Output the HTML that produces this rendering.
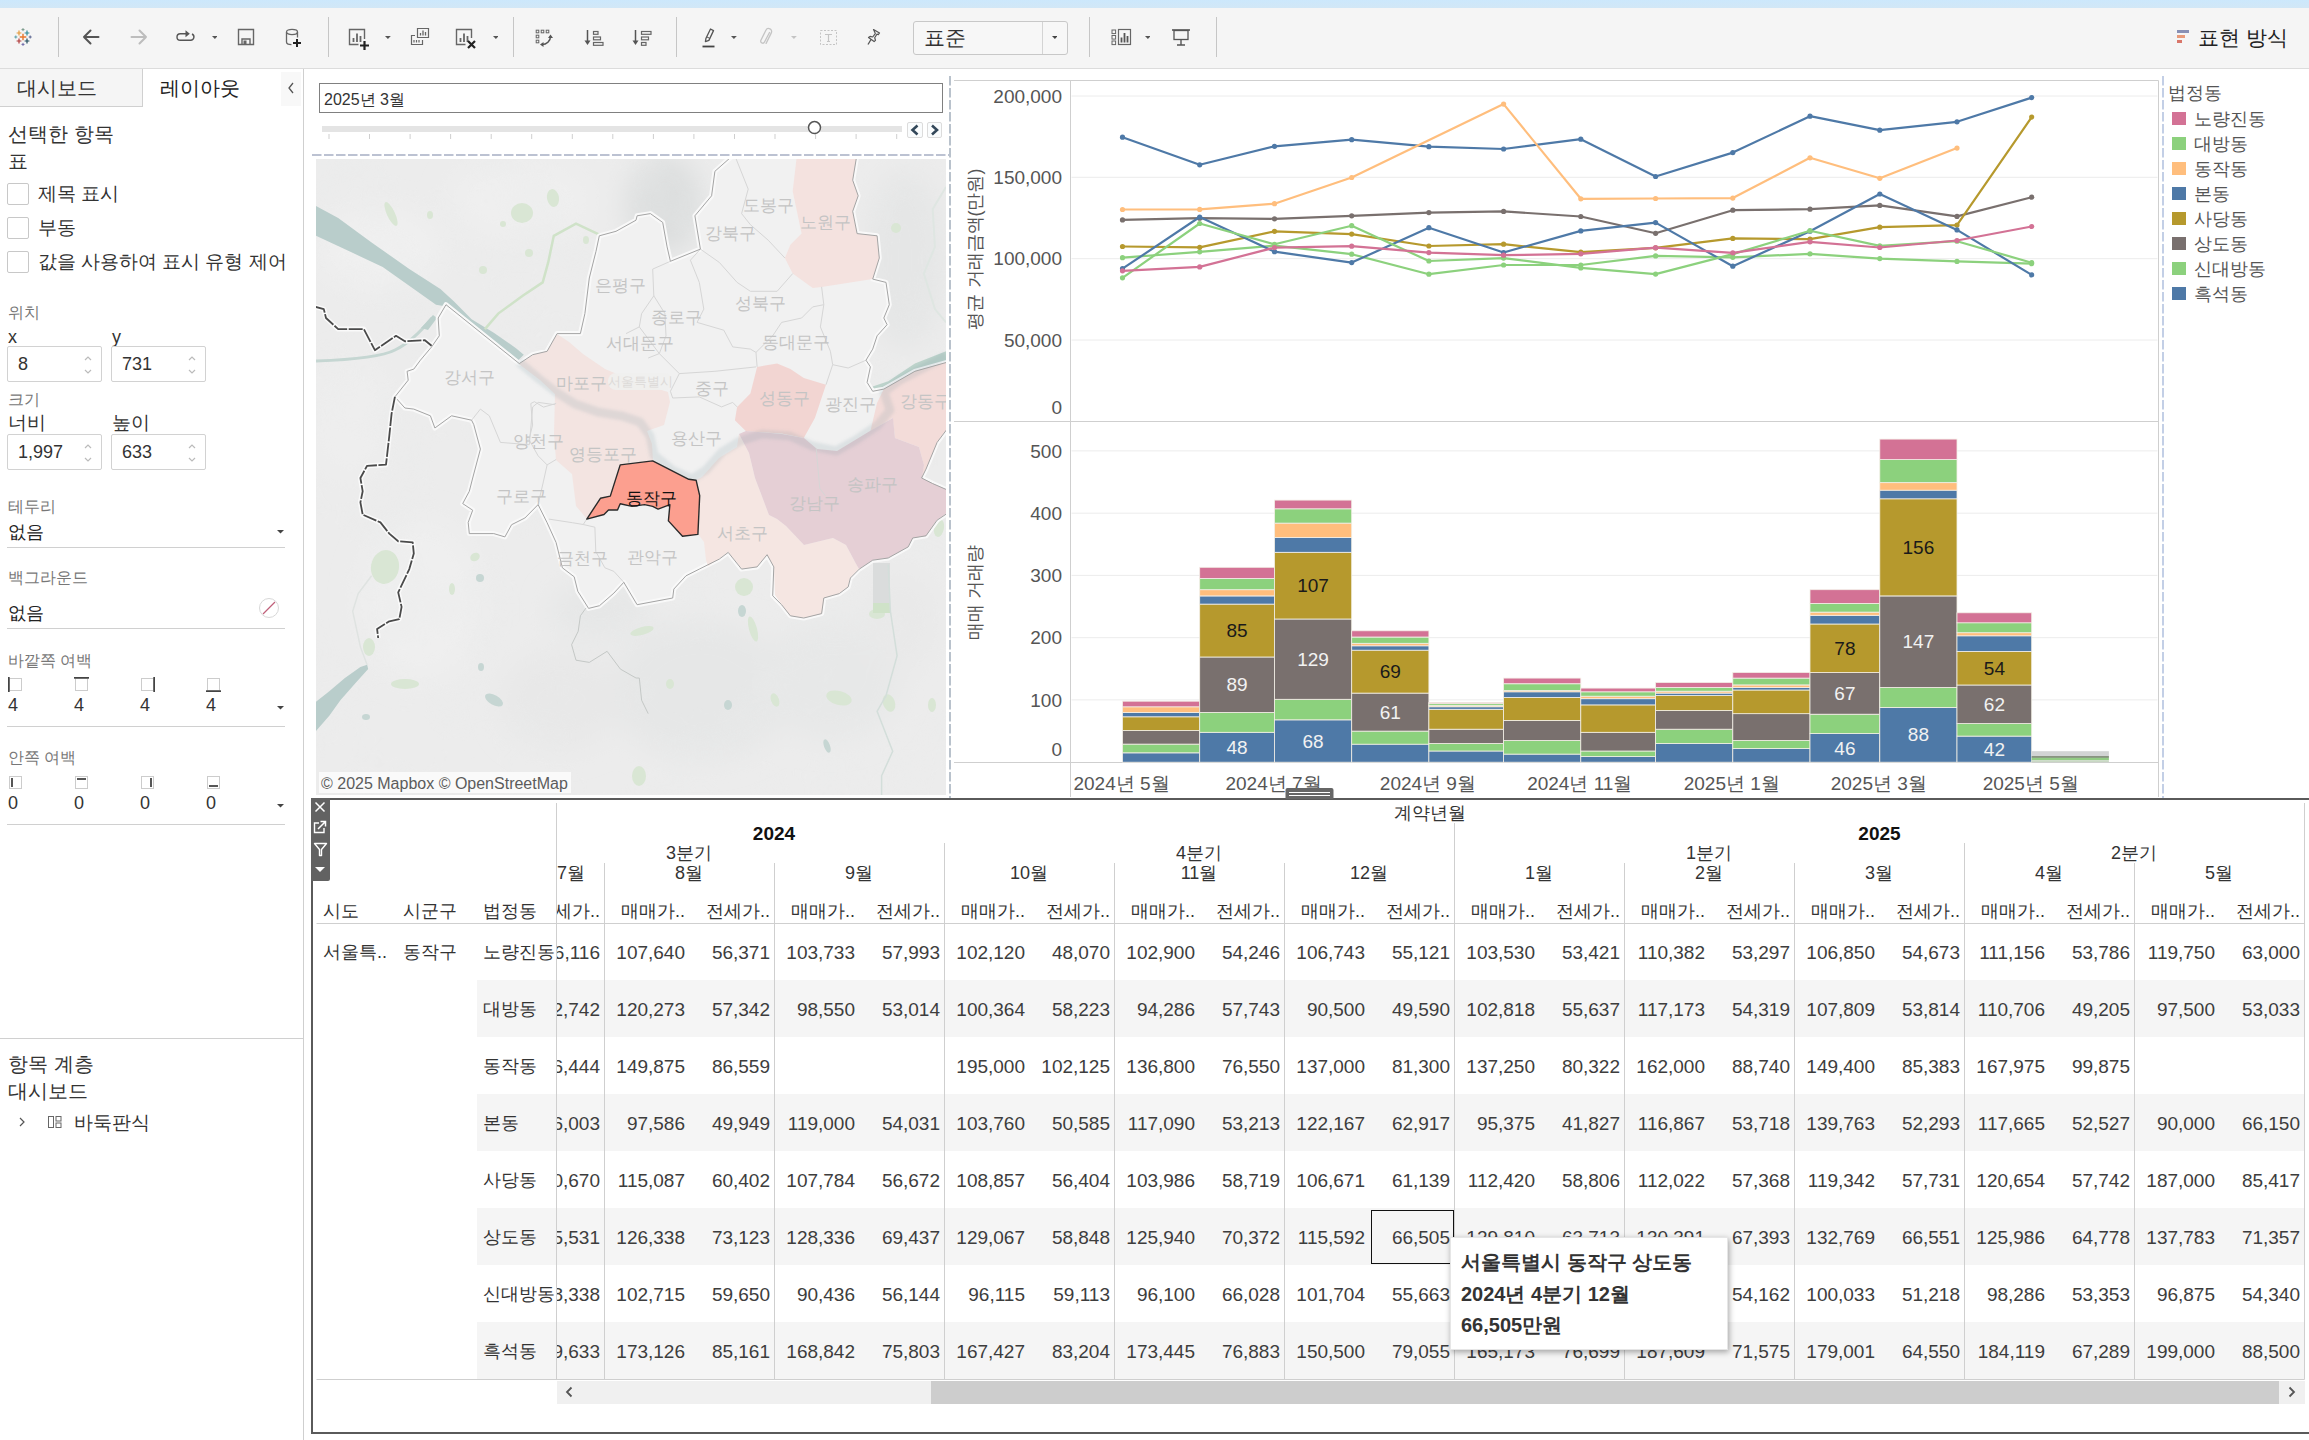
<!DOCTYPE html>
<html lang="ko"><head><meta charset="utf-8"><title>Tableau dashboard</title>
<style>
html,body{margin:0;padding:0;background:#fff;}
body{width:2309px;height:1440px;position:relative;overflow:hidden;font-family:"Liberation Sans", sans-serif;}
div,svg{box-sizing:border-box;}
</style></head><body>
<div style="position:absolute;left:0.0px;top:0.0px;width:2309.0px;height:8.0px;background:linear-gradient(#cce8fc,#d2e7f6);"></div>
<div style="position:absolute;left:0.0px;top:8.0px;width:2309.0px;height:60.0px;background:#f5f5f5;"></div>
<div style="position:absolute;left:0.0px;top:68.0px;width:2309.0px;height:1.0px;background:#dcdcdc;"></div>
<div style="position:absolute;left:58.0px;top:17.0px;width:1.0px;height:40.0px;background:#c6c6c6;"></div>
<div style="position:absolute;left:327.8px;top:17.0px;width:1.0px;height:40.0px;background:#c6c6c6;"></div>
<div style="position:absolute;left:513.0px;top:17.0px;width:1.0px;height:40.0px;background:#c6c6c6;"></div>
<div style="position:absolute;left:676.1px;top:17.0px;width:1.0px;height:40.0px;background:#c6c6c6;"></div>
<div style="position:absolute;left:1088.5px;top:17.0px;width:1.0px;height:40.0px;background:#c6c6c6;"></div>
<div style="position:absolute;left:1216.1px;top:17.0px;width:1.0px;height:40.0px;background:#c6c6c6;"></div>
<svg style="position:absolute;left:11.4px;top:24.8px;" width="24" height="24" viewBox="0 0 24 24"><path d="M8.7 12H15.3M12 8.7V15.3" stroke="#e8762d" stroke-width="1.4" fill="none"/><path d="M5.6 8H10.4M8 5.6V10.4" stroke="#e59a3a" stroke-width="1.2" fill="none"/><path d="M13.6 8H18.4M16 5.6V10.4" stroke="#2e8a98" stroke-width="1.2" fill="none"/><path d="M5.6 16H10.4M8 13.6V18.4" stroke="#b03a3a" stroke-width="1.2" fill="none"/><path d="M13.6 16H18.4M16 13.6V18.4" stroke="#1f4a5c" stroke-width="1.2" fill="none"/><path d="M10.5 4.6H13.5M12 3.0999999999999996V6.1" stroke="#7a9a8a" stroke-width="1.0" fill="none"/><path d="M10.5 19.4H13.5M12 17.9V20.9" stroke="#6f6aa8" stroke-width="1.0" fill="none"/><path d="M3.3 12H6.3M4.8 10.5V13.5" stroke="#5aa0a8" stroke-width="1.0" fill="none"/><path d="M17.7 12H20.7M19.2 10.5V13.5" stroke="#5b6591" stroke-width="1.0" fill="none"/></svg>
<svg style="position:absolute;left:80.0px;top:27.0px;" width="22" height="20" viewBox="0 0 22 20"><path d="M18.5 10H4M10.5 3.5L4 10l6.5 6.5" stroke="#555" stroke-width="2" fill="none" stroke-linecap="round" stroke-linejoin="round"/></svg>
<svg style="position:absolute;left:128.0px;top:27.0px;" width="22" height="20" viewBox="0 0 22 20"><path d="M3.5 10H18M11.5 3.5L18 10l-6.5 6.5" stroke="#bdbdbd" stroke-width="2" fill="none" stroke-linecap="round" stroke-linejoin="round"/></svg>
<svg style="position:absolute;left:174.0px;top:26.0px;" width="24" height="20" viewBox="0 0 24 20"><path d="M12.5 7.7H6.3a3.3 3.3 0 0 0 0 6.6h10.4a3.3 3.3 0 0 0 1.3-6.3" stroke="#555" stroke-width="1.4" fill="none"/><path d="M11.5 4.2l4.3 3.5-4.3 3.5z" fill="#555"/></svg>
<svg style="position:absolute;left:211.5px;top:35.5px;" width="5.8" height="3.9" viewBox="0 0 5.8 3.9"><path d="M0 0 H5.8 L2.9 2.9 Z" fill="#555"/></svg>
<svg style="position:absolute;left:237.0px;top:28.0px;" width="18" height="18" viewBox="0 0 18 18"><path d="M1.5 1.5h15v15h-15z" stroke="#666" stroke-width="1.4" fill="none"/><path d="M5 16.5v-5.5h8v5.5" stroke="#666" stroke-width="1.4" fill="none"/><rect x="6.5" y="12.5" width="3" height="3.5" fill="#666"/></svg>
<svg style="position:absolute;left:284.0px;top:28.0px;" width="20" height="22" viewBox="0 0 20 22"><ellipse cx="8" cy="4" rx="5.5" ry="2.6" stroke="#666" stroke-width="1.3" fill="none"/><path d="M2.5 4v10c0 1.4 2.2 2.6 5 2.6M13.5 4v5.5" stroke="#666" stroke-width="1.3" fill="none"/><path d="M9 15h8M13 11v8" stroke="#222" stroke-width="2" fill="none"/></svg>
<svg style="position:absolute;left:348.0px;top:28.0px;" width="24" height="22" viewBox="0 0 24 22"><path d="M16.5 11V1.5h-15v15h9" stroke="#666" stroke-width="1.4" fill="none"/><path d="M5.5 14V10M9 14V5.5M12.5 14V8" stroke="#666" stroke-width="1.8"/><path d="M12 17.5h9M16.5 13v9" stroke="#222" stroke-width="2.2"/></svg>
<svg style="position:absolute;left:385.1px;top:35.5px;" width="5.8" height="3.9" viewBox="0 0 5.8 3.9"><path d="M0 0 H5.8 L2.9 2.9 Z" fill="#555"/></svg>
<svg style="position:absolute;left:410.0px;top:27.0px;" width="20" height="20" viewBox="0 0 20 20"><path d="M7.5 1.5h11v9h-11z" stroke="#666" stroke-width="1.2" fill="none"/><path d="M10.5 8.5V6M13 8.5V3.5M15.5 8.5V5" stroke="#666" stroke-width="1.3"/><path d="M5 8.5H1.5v9h11v-4.5" stroke="#666" stroke-width="1.2" fill="none"/><path d="M4 15.5V13M6.5 15.5V13M9 15.5V13" stroke="#666" stroke-width="1.2"/></svg>
<svg style="position:absolute;left:455.0px;top:28.0px;" width="24" height="22" viewBox="0 0 24 22"><path d="M16.5 10V1.5h-15v15h9" stroke="#666" stroke-width="1.4" fill="none"/><path d="M5.5 14V10M9 14V5.5M12.5 14V8" stroke="#666" stroke-width="1.8"/><path d="M13 13l7 7M20 13l-7 7" stroke="#222" stroke-width="2.2"/></svg>
<svg style="position:absolute;left:492.5px;top:35.5px;" width="5.8" height="3.9" viewBox="0 0 5.8 3.9"><path d="M0 0 H5.8 L2.9 2.9 Z" fill="#555"/></svg>
<svg style="position:absolute;left:535.0px;top:29.0px;" width="20" height="20" viewBox="0 0 20 20"><rect x="1.2" y="1.2" width="2.6" height="2.6" stroke="#666" stroke-width="1" fill="none"/><rect x="6.2" y="1.2" width="2.6" height="2.6" stroke="#666" stroke-width="1" fill="none"/><rect x="11.2" y="1.2" width="2.6" height="2.6" stroke="#666" stroke-width="1" fill="none"/><rect x="1.2" y="6.2" width="2.6" height="2.6" stroke="#666" stroke-width="1" fill="none"/><rect x="1.2" y="11.2" width="2.6" height="2.6" stroke="#666" stroke-width="1" fill="none"/><path d="M7 15.5c4.5 0 8.5-3.5 8.5-8" stroke="#555" stroke-width="1.5" fill="none"/><path d="M5 15.5l3.5-2.5v5zM15.5 5.5l-2.5 3.5h5z" fill="#555"/></svg>
<svg style="position:absolute;left:584.0px;top:29.0px;" width="20" height="18" viewBox="0 0 20 18"><path d="M3.5 1v13" stroke="#555" stroke-width="1.5"/><path d="M0.5 11.5L3.5 16l3-4.5z" fill="#555"/><rect x="9.5" y="2.5" width="4.5" height="2.8" stroke="#666" stroke-width="1.2" fill="none"/><rect x="9.5" y="8" width="7" height="2.8" stroke="#666" stroke-width="1.2" fill="none"/><rect x="9.5" y="13.5" width="9.5" height="2.8" stroke="#666" stroke-width="1.2" fill="none"/></svg>
<svg style="position:absolute;left:632.0px;top:29.0px;" width="20" height="18" viewBox="0 0 20 18"><path d="M3.5 1v13" stroke="#555" stroke-width="1.5"/><path d="M0.5 11.5L3.5 16l3-4.5z" fill="#555"/><rect x="9.5" y="2.5" width="9.5" height="2.8" stroke="#666" stroke-width="1.2" fill="none"/><rect x="9.5" y="8" width="7" height="2.8" stroke="#666" stroke-width="1.2" fill="none"/><rect x="9.5" y="13.5" width="4.5" height="2.8" stroke="#666" stroke-width="1.2" fill="none"/></svg>
<svg style="position:absolute;left:701.0px;top:27.0px;" width="16" height="22" viewBox="0 0 16 22"><path d="M9.5 2l3 1.6-4.6 9.8-3.5 1.2 0.6-3.4z" stroke="#555" stroke-width="1.3" fill="none" stroke-linejoin="round"/><path d="M6 10l3 1.5" stroke="#555" stroke-width="1"/><path d="M1.5 19.5h12" stroke="#444" stroke-width="1.8"/></svg>
<svg style="position:absolute;left:731.4px;top:35.5px;" width="5.8" height="3.9" viewBox="0 0 5.8 3.9"><path d="M0 0 H5.8 L2.9 2.9 Z" fill="#555"/></svg>
<svg style="position:absolute;left:757.0px;top:27.0px;" width="18" height="22" viewBox="0 0 18 22"><path d="M12.5 5.5l-5 9.5a2 2 0 0 1-3.6-1.8l5-10a3 3 0 0 1 5.4 2.7l-5.2 10.5" stroke="#c4c4c4" stroke-width="1.3" fill="none" stroke-linecap="round"/></svg>
<svg style="position:absolute;left:791.3px;top:35.5px;" width="5.8" height="3.9" viewBox="0 0 5.8 3.9"><path d="M0 0 H5.8 L2.9 2.9 Z" fill="#c4c4c4"/></svg>
<svg style="position:absolute;left:819.0px;top:29.0px;" width="20" height="18" viewBox="0 0 20 18"><rect x="1.5" y="1.5" width="16" height="14" stroke="#c4c4c4" stroke-width="1" stroke-dasharray="2 1.5" fill="none"/><path d="M6 5.5h7M9.5 5.5v7M8 12.5h3" stroke="#c4c4c4" stroke-width="1.2"/></svg>
<svg style="position:absolute;left:865.0px;top:27.0px;" width="18" height="22" viewBox="0 0 18 22"><path d="M8.5 2.5l6 3.5-1.2 1.6-1.4-.4-2.2 3.6.8 2.6-1.4 1.2-5.6-4 1.6-1.2 2.6.6 2.6-3.4-.6-1.6z" stroke="#555" stroke-width="1.2" fill="none" stroke-linejoin="round"/><path d="M6 12.5l-3 5" stroke="#555" stroke-width="1.3"/></svg>
<div style="position:absolute;left:913px;top:21px;width:155px;height:34px;border:1px solid #c8c8c8;border-radius:3px;background:#f7f7f7"></div>
<div style="position:absolute;left:1041.5px;top:22.0px;width:1.0px;height:32.0px;background:#d4d4d4;"></div>
<div style="position:absolute;top:24.0px;height:27px;line-height:27px;font-size:21px;color:#333;white-space:nowrap;left:924.0px;">표준</div>
<svg style="position:absolute;left:1051.6px;top:36.0px;" width="5.8" height="3.9" viewBox="0 0 5.8 3.9"><path d="M0 0 H5.8 L2.9 2.9 Z" fill="#444"/></svg>
<svg style="position:absolute;left:1111.0px;top:28.0px;" width="22" height="19" viewBox="0 0 22 19"><rect x="1" y="2" width="3.6" height="3.6" stroke="#666" stroke-width="1" fill="none"/><rect x="1" y="7.5" width="3.6" height="3.6" stroke="#666" stroke-width="1" fill="none"/><rect x="1" y="13" width="3.6" height="3.6" stroke="#666" stroke-width="1" fill="none"/><rect x="7.5" y="1.5" width="12" height="15" stroke="#666" stroke-width="1.2" fill="none"/><path d="M10.5 14.5V9.5M13.5 14.5V5M16.5 14.5V8" stroke="#555" stroke-width="1.8"/></svg>
<svg style="position:absolute;left:1144.5px;top:35.5px;" width="5.8" height="3.9" viewBox="0 0 5.8 3.9"><path d="M0 0 H5.8 L2.9 2.9 Z" fill="#555"/></svg>
<svg style="position:absolute;left:1171.0px;top:28.0px;" width="20" height="20" viewBox="0 0 20 20"><path d="M1 2h18" stroke="#555" stroke-width="1.6"/><rect x="3" y="2.5" width="14" height="9" stroke="#555" stroke-width="1.3" fill="none"/><path d="M10 11.5v5M6 17h8" stroke="#555" stroke-width="1.4"/></svg>
<svg style="position:absolute;left:2176.0px;top:29.0px;" width="16" height="16" viewBox="0 0 16 16"><rect x="1" y="1" width="12" height="3" fill="#8890b5"/><rect x="1" y="6" width="8" height="3" fill="#e89a7a"/><rect x="1" y="11" width="5" height="3" fill="#d9766a"/></svg>
<div style="position:absolute;top:24.0px;height:27px;line-height:27px;font-size:21px;color:#222;white-space:nowrap;left:2198.0px;">표현 방식</div>
<div style="position:absolute;left:0.0px;top:69.0px;width:303.0px;height:1371.0px;background:#fff;"></div>
<div style="position:absolute;left:303.0px;top:69.0px;width:1.0px;height:1371.0px;background:#cfcfcf;"></div>
<div style="position:absolute;left:0.0px;top:69.0px;width:142.0px;height:37.0px;background:#f5f5f5;"></div>
<div style="position:absolute;left:0.0px;top:106.0px;width:142.0px;height:1.0px;background:#d0d0d0;"></div>
<div style="position:absolute;left:142.0px;top:69.0px;width:1.0px;height:38.0px;background:#d0d0d0;"></div>
<div style="position:absolute;left:281.0px;top:72.0px;width:20.0px;height:34.0px;background:#f8f8f8;"></div>
<div style="position:absolute;top:74.5px;height:26px;line-height:26px;font-size:20px;color:#333;white-space:nowrap;left:17.0px;">대시보드</div>
<div style="position:absolute;top:74.5px;height:26px;line-height:26px;font-size:20px;color:#222;white-space:nowrap;left:160.0px;">레이아웃</div>
<svg style="position:absolute;left:286.0px;top:81.0px;" width="10" height="14" viewBox="0 0 10 14"><path d="M7 2L3 7l4 5" stroke="#555" stroke-width="1.3" fill="none"/></svg>
<div style="position:absolute;top:121.0px;height:26px;line-height:26px;font-size:20px;color:#333;white-space:nowrap;left:8.0px;">선택한 항목</div>
<div style="position:absolute;top:148.0px;height:26px;line-height:26px;font-size:20px;color:#333;white-space:nowrap;left:8.0px;">표</div>
<div style="position:absolute;left:7px;top:183px;width:22px;height:22px;border:1px solid #c8c8c8;border-radius:2px;background:#fff"></div>
<div style="position:absolute;top:182.0px;height:24px;line-height:24px;font-size:18.5px;color:#333;white-space:nowrap;left:38.0px;">제목 표시</div>
<div style="position:absolute;left:7px;top:217px;width:22px;height:22px;border:1px solid #c8c8c8;border-radius:2px;background:#fff"></div>
<div style="position:absolute;top:216.0px;height:24px;line-height:24px;font-size:18.5px;color:#333;white-space:nowrap;left:38.0px;">부동</div>
<div style="position:absolute;left:7px;top:251px;width:22px;height:22px;border:1px solid #c8c8c8;border-radius:2px;background:#fff"></div>
<div style="position:absolute;top:250.0px;height:24px;line-height:24px;font-size:18.5px;color:#333;white-space:nowrap;left:38.0px;">값을 사용하여 표시 유형 제어</div>
<div style="position:absolute;top:301.5px;height:21px;line-height:21px;font-size:16px;color:#777;white-space:nowrap;left:8.0px;">위치</div>
<div style="position:absolute;top:325.5px;height:23px;line-height:23px;font-size:18px;color:#333;white-space:nowrap;left:8.0px;">x</div>
<div style="position:absolute;top:325.5px;height:23px;line-height:23px;font-size:18px;color:#333;white-space:nowrap;left:112.0px;">y</div>
<div style="position:absolute;top:388.5px;height:21px;line-height:21px;font-size:16px;color:#777;white-space:nowrap;left:8.0px;">크기</div>
<div style="position:absolute;top:409.5px;height:25px;line-height:25px;font-size:19px;color:#333;white-space:nowrap;left:8.0px;">너비</div>
<div style="position:absolute;top:409.5px;height:25px;line-height:25px;font-size:19px;color:#333;white-space:nowrap;left:112.0px;">높이</div>
<div style="position:absolute;left:7px;top:346px;width:95px;height:36px;border:1px solid #d2d2d2;border-radius:2px;background:#fff"></div><div style="position:absolute;top:353.1px;height:23px;line-height:23px;font-size:18px;color:#333;white-space:nowrap;left:18.0px;">8</div><svg style="position:absolute;left:83.0px;top:355.0px;" width="10" height="20" viewBox="0 0 10 20"><path d="M2 5l3-3 3 3" stroke="#bbb" stroke-width="1.2" fill="none"/><path d="M2 15l3 3 3-3" stroke="#bbb" stroke-width="1.2" fill="none"/></svg>
<div style="position:absolute;left:111px;top:346px;width:95px;height:36px;border:1px solid #d2d2d2;border-radius:2px;background:#fff"></div><div style="position:absolute;top:353.1px;height:23px;line-height:23px;font-size:18px;color:#333;white-space:nowrap;left:122.0px;">731</div><svg style="position:absolute;left:187.0px;top:355.0px;" width="10" height="20" viewBox="0 0 10 20"><path d="M2 5l3-3 3 3" stroke="#bbb" stroke-width="1.2" fill="none"/><path d="M2 15l3 3 3-3" stroke="#bbb" stroke-width="1.2" fill="none"/></svg>
<div style="position:absolute;left:7px;top:434px;width:95px;height:36px;border:1px solid #d2d2d2;border-radius:2px;background:#fff"></div><div style="position:absolute;top:441.1px;height:23px;line-height:23px;font-size:18px;color:#333;white-space:nowrap;left:18.0px;">1,997</div><svg style="position:absolute;left:83.0px;top:443.0px;" width="10" height="20" viewBox="0 0 10 20"><path d="M2 5l3-3 3 3" stroke="#bbb" stroke-width="1.2" fill="none"/><path d="M2 15l3 3 3-3" stroke="#bbb" stroke-width="1.2" fill="none"/></svg>
<div style="position:absolute;left:111px;top:434px;width:95px;height:36px;border:1px solid #d2d2d2;border-radius:2px;background:#fff"></div><div style="position:absolute;top:441.1px;height:23px;line-height:23px;font-size:18px;color:#333;white-space:nowrap;left:122.0px;">633</div><svg style="position:absolute;left:187.0px;top:443.0px;" width="10" height="20" viewBox="0 0 10 20"><path d="M2 5l3-3 3 3" stroke="#bbb" stroke-width="1.2" fill="none"/><path d="M2 15l3 3 3-3" stroke="#bbb" stroke-width="1.2" fill="none"/></svg>
<div style="position:absolute;top:495.5px;height:21px;line-height:21px;font-size:16px;color:#777;white-space:nowrap;left:8.0px;">테두리</div>
<div style="position:absolute;top:520.5px;height:23px;line-height:23px;font-size:18px;color:#222;white-space:nowrap;left:8.0px;">없음</div>
<svg style="position:absolute;left:276.5px;top:530.2px;" width="7.0" height="4.5" viewBox="0 0 7.0 4.5"><path d="M0 0 H7.0 L3.5 3.5 Z" fill="#444"/></svg>
<div style="position:absolute;left:7.0px;top:547.0px;width:278.0px;height:1.0px;background:#d0d0d0;"></div>
<div style="position:absolute;top:566.5px;height:21px;line-height:21px;font-size:16px;color:#777;white-space:nowrap;left:8.0px;">백그라운드</div>
<div style="position:absolute;top:601.5px;height:23px;line-height:23px;font-size:18px;color:#222;white-space:nowrap;left:8.0px;">없음</div>
<svg style="position:absolute;left:258.0px;top:597.0px;" width="22" height="22" viewBox="0 0 22 22"><circle cx="11" cy="11" r="9.5" stroke="#d8d8d8" stroke-width="1" fill="#fff"/><path d="M5 17L17 5" stroke="#c0607a" stroke-width="1.2"/></svg>
<div style="position:absolute;left:7.0px;top:628.0px;width:278.0px;height:1.0px;background:#d0d0d0;"></div>
<div style="position:absolute;top:649.5px;height:21px;line-height:21px;font-size:16px;color:#777;white-space:nowrap;left:8.0px;">바깥쪽 여백</div>
<svg style="position:absolute;left:8.0px;top:677.0px;" width="15" height="15" viewBox="0 0 15 15"><rect x="1.5" y="1.5" width="12" height="12" stroke="#999" stroke-width="1" stroke-dasharray="1 1" fill="none"/><path d="M0.8 0v15" stroke="#444" stroke-width="1.8"/></svg>
<div style="position:absolute;top:693.6px;height:23px;line-height:23px;font-size:18px;color:#333;white-space:nowrap;left:8.0px;">4</div>
<svg style="position:absolute;left:8.0px;top:775.0px;" width="15" height="15" viewBox="0 0 15 15"><rect x="1.5" y="1.5" width="12" height="12" stroke="#999" stroke-width="1" stroke-dasharray="1 1" fill="none"/><path d="M4 3v9" stroke="#444" stroke-width="1.8"/></svg>
<div style="position:absolute;top:791.6px;height:23px;line-height:23px;font-size:18px;color:#333;white-space:nowrap;left:8.0px;">0</div>
<svg style="position:absolute;left:74.0px;top:677.0px;" width="15" height="15" viewBox="0 0 15 15"><rect x="1.5" y="1.5" width="12" height="12" stroke="#999" stroke-width="1" stroke-dasharray="1 1" fill="none"/><path d="M0 0.8h15" stroke="#444" stroke-width="1.8"/></svg>
<div style="position:absolute;top:693.6px;height:23px;line-height:23px;font-size:18px;color:#333;white-space:nowrap;left:74.0px;">4</div>
<svg style="position:absolute;left:74.0px;top:775.0px;" width="15" height="15" viewBox="0 0 15 15"><rect x="1.5" y="1.5" width="12" height="12" stroke="#999" stroke-width="1" stroke-dasharray="1 1" fill="none"/><path d="M3 4h9" stroke="#444" stroke-width="1.8"/></svg>
<div style="position:absolute;top:791.6px;height:23px;line-height:23px;font-size:18px;color:#333;white-space:nowrap;left:74.0px;">0</div>
<svg style="position:absolute;left:140.0px;top:677.0px;" width="15" height="15" viewBox="0 0 15 15"><rect x="1.5" y="1.5" width="12" height="12" stroke="#999" stroke-width="1" stroke-dasharray="1 1" fill="none"/><path d="M14.2 0v15" stroke="#444" stroke-width="1.8"/></svg>
<div style="position:absolute;top:693.6px;height:23px;line-height:23px;font-size:18px;color:#333;white-space:nowrap;left:140.0px;">4</div>
<svg style="position:absolute;left:140.0px;top:775.0px;" width="15" height="15" viewBox="0 0 15 15"><rect x="1.5" y="1.5" width="12" height="12" stroke="#999" stroke-width="1" stroke-dasharray="1 1" fill="none"/><path d="M11 3v9" stroke="#444" stroke-width="1.8"/></svg>
<div style="position:absolute;top:791.6px;height:23px;line-height:23px;font-size:18px;color:#333;white-space:nowrap;left:140.0px;">0</div>
<svg style="position:absolute;left:206.0px;top:677.0px;" width="15" height="15" viewBox="0 0 15 15"><rect x="1.5" y="1.5" width="12" height="12" stroke="#999" stroke-width="1" stroke-dasharray="1 1" fill="none"/><path d="M0 14.2h15" stroke="#444" stroke-width="1.8"/></svg>
<div style="position:absolute;top:693.6px;height:23px;line-height:23px;font-size:18px;color:#333;white-space:nowrap;left:206.0px;">4</div>
<svg style="position:absolute;left:206.0px;top:775.0px;" width="15" height="15" viewBox="0 0 15 15"><rect x="1.5" y="1.5" width="12" height="12" stroke="#999" stroke-width="1" stroke-dasharray="1 1" fill="none"/><path d="M3 11h9" stroke="#444" stroke-width="1.8"/></svg>
<div style="position:absolute;top:791.6px;height:23px;line-height:23px;font-size:18px;color:#333;white-space:nowrap;left:206.0px;">0</div>
<svg style="position:absolute;left:276.5px;top:706.2px;" width="7.0" height="4.5" viewBox="0 0 7.0 4.5"><path d="M0 0 H7.0 L3.5 3.5 Z" fill="#444"/></svg>
<svg style="position:absolute;left:276.5px;top:804.2px;" width="7.0" height="4.5" viewBox="0 0 7.0 4.5"><path d="M0 0 H7.0 L3.5 3.5 Z" fill="#444"/></svg>
<div style="position:absolute;left:7.0px;top:726.0px;width:278.0px;height:1.0px;background:#d0d0d0;"></div>
<div style="position:absolute;top:746.5px;height:21px;line-height:21px;font-size:16px;color:#777;white-space:nowrap;left:8.0px;">안쪽 여백</div>
<div style="position:absolute;left:7.0px;top:824.0px;width:278.0px;height:1.0px;background:#d0d0d0;"></div>
<div style="position:absolute;left:0.0px;top:1038.0px;width:303.0px;height:1.0px;background:#d0d0d0;"></div>
<div style="position:absolute;top:1051.0px;height:26px;line-height:26px;font-size:20px;color:#333;white-space:nowrap;left:8.0px;">항목 계층</div>
<div style="position:absolute;top:1078.0px;height:26px;line-height:26px;font-size:20px;color:#333;white-space:nowrap;left:8.0px;">대시보드</div>
<svg style="position:absolute;left:17.0px;top:1116.0px;" width="10" height="12" viewBox="0 0 10 12"><path d="M3 2l4 4-4 4" stroke="#555" stroke-width="1.2" fill="none"/></svg>
<svg style="position:absolute;left:47.0px;top:1114.0px;" width="16" height="16" viewBox="0 0 16 16"><rect x="1.5" y="2.5" width="5" height="11" stroke="#666" stroke-width="1" fill="none"/><rect x="9" y="2.5" width="5" height="4.5" stroke="#666" stroke-width="1" fill="none"/><rect x="9" y="9" width="5" height="4.5" stroke="#666" stroke-width="1" fill="none"/></svg>
<div style="position:absolute;top:1110.0px;height:25px;line-height:25px;font-size:19px;color:#333;white-space:nowrap;left:74.0px;">바둑판식</div>
<div style="position:absolute;left:319px;top:83px;width:624px;height:30px;border:1px solid #808080;background:#fff"></div>
<div style="position:absolute;top:89.0px;height:21px;line-height:21px;font-size:16px;color:#333;white-space:nowrap;left:324.0px;">2025년 3월</div>
<div style="position:absolute;left:322.0px;top:126.0px;width:580.0px;height:6.0px;background:#e4e4e4;"></div>
<svg style="position:absolute;left:322.0px;top:133.5px;" width="590" height="6" viewBox="0 0 590 6"><rect x="6.5" y="0" width="1" height="5" fill="#cfcfcf"/><rect x="47.0" y="0" width="1" height="5" fill="#cfcfcf"/><rect x="87.6" y="0" width="1" height="5" fill="#cfcfcf"/><rect x="128.1" y="0" width="1" height="5" fill="#cfcfcf"/><rect x="168.7" y="0" width="1" height="5" fill="#cfcfcf"/><rect x="209.2" y="0" width="1" height="5" fill="#cfcfcf"/><rect x="249.8" y="0" width="1" height="5" fill="#cfcfcf"/><rect x="290.3" y="0" width="1" height="5" fill="#cfcfcf"/><rect x="330.9" y="0" width="1" height="5" fill="#cfcfcf"/><rect x="371.4" y="0" width="1" height="5" fill="#cfcfcf"/><rect x="412.0" y="0" width="1" height="5" fill="#cfcfcf"/><rect x="452.5" y="0" width="1" height="5" fill="#cfcfcf"/><rect x="493.1" y="0" width="1" height="5" fill="#cfcfcf"/><rect x="533.6" y="0" width="1" height="5" fill="#cfcfcf"/><rect x="574.2" y="0" width="1" height="5" fill="#cfcfcf"/></svg>
<svg style="position:absolute;left:806.0px;top:119.0px;" width="18" height="18" viewBox="0 0 18 18"><circle cx="8.5" cy="8.6" r="6" stroke="#555" stroke-width="1.5" fill="#fff"/></svg>
<div style="position:absolute;left:907px;top:122px;width:15.5px;height:15.5px;border:1px solid #dcdcdc;border-radius:2px;background:#fafcfd"></div>
<svg style="position:absolute;left:907.0px;top:122.0px;" width="16" height="16" viewBox="0 0 16 16"><path d="M10.5 3.5L5.5 8l5 4.5" stroke="#33485a" stroke-width="2.6" fill="none"/></svg>
<div style="position:absolute;left:926.5px;top:122px;width:15.5px;height:15.5px;border:1px solid #dcdcdc;border-radius:2px;background:#fafcfd"></div>
<svg style="position:absolute;left:926.5px;top:122.0px;" width="16" height="16" viewBox="0 0 16 16"><path d="M5 3.5L10 8l-5 4.5" stroke="#33485a" stroke-width="2.6" fill="none"/></svg>
<svg style="position:absolute;left:0;top:0" width="2309" height="800" viewBox="0 0 2309 800"><path d="M312 155H950" stroke="#bcc2d2" stroke-width="2" stroke-dasharray="9.5 2.5" fill="none"/><path d="M950 76V798" stroke="#b9c2cc" stroke-width="2" stroke-dasharray="9.5 2.5" fill="none"/><path d="M2163 76V798" stroke="#c3cfe6" stroke-width="2" stroke-dasharray="9.5 2.5" fill="none"/></svg>
<svg style="position:absolute;left:316px;top:159px" width="630" height="636" viewBox="316 159 630 636"><defs><filter id="bl" x="-50%" y="-50%" width="200%" height="200%"><feGaussianBlur stdDeviation="14"/></filter><filter id="b2" x="-20%" y="-20%" width="140%" height="140%"><feGaussianBlur stdDeviation="1.6"/></filter><filter id="tx" x="0" y="0" width="100%" height="100%"><feTurbulence type="fractalNoise" baseFrequency="0.014" numOctaves="3" seed="7" result="n"/><feColorMatrix in="n" type="matrix" values="0 0 0 0 0.82  0 0 0 0 0.83  0 0 0 0 0.83  1.6 0 0 0 -0.72"/></filter></defs><rect x="316" y="159" width="630" height="636" fill="#ececec"/><g filter="url(#bl)"><ellipse cx="665" cy="205" rx="38" ry="50" fill="#dcdede"/><ellipse cx="905" cy="260" rx="40" ry="90" fill="#e5e6e6"/><ellipse cx="700" cy="690" rx="90" ry="70" fill="#e6e7e7"/><ellipse cx="560" cy="700" rx="60" ry="50" fill="#e8e8e8"/><ellipse cx="830" cy="680" rx="70" ry="60" fill="#e7e8e8"/><ellipse cx="600" cy="610" rx="50" ry="30" fill="#e6e7e7"/><ellipse cx="900" cy="620" rx="40" ry="50" fill="#e9e9e9"/><ellipse cx="380" cy="250" rx="60" ry="40" fill="#f0f0f0"/><ellipse cx="420" cy="600" rx="60" ry="80" fill="#efefef"/><ellipse cx="350" cy="420" rx="40" ry="60" fill="#eeeeee"/><ellipse cx="520" cy="200" rx="70" ry="40" fill="#efefef"/></g><rect x="316" y="159" width="630" height="636" filter="url(#tx)" opacity="0.55"/><path d="M313.8 204.7 L338.2 218.0 L371.6 242.4 L409.3 269.1 L440.4 289.1 L453.8 301.3 L471.6 319.3 L493.8 332.7 L516.0 348.2 L523.8 354.7 L518.2 360.2 L493.8 342.4 L471.6 326.9 L449.3 306.9 L436.0 304.7 L413.8 289.1 L382.7 266.9 L349.3 251.3 L313.8 234.7 Z" fill="#b9cdcb"/><path d="M950.4 349.6 L914.9 363.6 L888.2 381.3 L870.4 387.3 L873.8 391.8 L890.4 388.7 L917.1 372.4 L950.4 360.7 Z" fill="#bdd3cb"/><path d="M313.8 703.6 L329.3 691.3 L344.9 678.0 L360.4 666.9 L367.1 664.7 L368.2 669.1 L356.0 682.4 L340.4 700.2 L329.3 715.8 L313.8 733.6 Z" fill="#b9cdcb"/><path d="M316 361C345 360 380 358 395 350C410 343 422 330 432 318" stroke="#c5d6d2" stroke-width="3" fill="none"/><path d="M421 328l12-13 4 3-9 12z" fill="#bcd0cc"/><ellipse cx="494" cy="700" rx="10" ry="5" transform="rotate(30 494 700)" fill="#c6d6d3"/><ellipse cx="480" cy="578" rx="4" ry="4" transform="rotate(0 480 578)" fill="#c6d6d3"/><ellipse cx="742" cy="611" rx="4" ry="6" transform="rotate(0 742 611)" fill="#c6d6d3"/><ellipse cx="728" cy="705" rx="4" ry="5" transform="rotate(0 728 705)" fill="#c6d6d3"/><ellipse cx="366" cy="717" rx="4" ry="3" transform="rotate(0 366 717)" fill="#c6d6d3"/><ellipse cx="481" cy="667" rx="3" ry="4" transform="rotate(0 481 667)" fill="#c6d6d3"/><ellipse cx="827" cy="746" rx="3" ry="7" transform="rotate(-20 827 746)" fill="#c6d6d3"/><ellipse cx="391" cy="214" rx="4" ry="13" transform="rotate(-25 391 214)" fill="#d9e6d4"/><ellipse cx="522" cy="213" rx="11" ry="10" transform="rotate(0 522 213)" fill="#d9e6d4"/><ellipse cx="553" cy="198" rx="6" ry="9" transform="rotate(-10 553 198)" fill="#d9e6d4"/><ellipse cx="483" cy="270" rx="4" ry="4" transform="rotate(0 483 270)" fill="#d9e6d4"/><ellipse cx="529" cy="253" rx="4" ry="4" transform="rotate(0 529 253)" fill="#d9e6d4"/><ellipse cx="430" cy="215" rx="3" ry="4" transform="rotate(0 430 215)" fill="#d9e6d4"/><ellipse cx="503" cy="224" rx="3" ry="3" transform="rotate(0 503 224)" fill="#d9e6d4"/><ellipse cx="586" cy="240" rx="3" ry="4" transform="rotate(0 586 240)" fill="#d9e6d4"/><ellipse cx="385" cy="567" rx="14" ry="17" transform="rotate(10 385 567)" fill="#d9e6d4"/><ellipse cx="369" cy="647" rx="6" ry="9" transform="rotate(0 369 647)" fill="#d9e6d4"/><ellipse cx="405" cy="684" rx="14" ry="5" transform="rotate(0 405 684)" fill="#d9e6d4"/><ellipse cx="452" cy="589" rx="3" ry="6" transform="rotate(0 452 589)" fill="#d9e6d4"/><ellipse cx="475" cy="557" rx="5" ry="4" transform="rotate(-30 475 557)" fill="#d9e6d4"/><ellipse cx="744" cy="587" rx="9" ry="9" transform="rotate(0 744 587)" fill="#d9e6d4"/><ellipse cx="753" cy="629" rx="4" ry="13" transform="rotate(-15 753 629)" fill="#d9e6d4"/><ellipse cx="839" cy="698" rx="13" ry="7" transform="rotate(15 839 698)" fill="#d9e6d4"/><ellipse cx="877" cy="614" rx="8" ry="5" transform="rotate(0 877 614)" fill="#d9e6d4"/><ellipse cx="642" cy="631" rx="12" ry="4" transform="rotate(-15 642 631)" fill="#d9e6d4"/><ellipse cx="639" cy="776" rx="7" ry="10" transform="rotate(0 639 776)" fill="#d9e6d4"/><ellipse cx="896" cy="228" rx="5" ry="5" transform="rotate(0 896 228)" fill="#d9e6d4"/><ellipse cx="889" cy="703" rx="6" ry="9" transform="rotate(-20 889 703)" fill="#d9e6d4"/><ellipse cx="939" cy="528" rx="5" ry="9" transform="rotate(10 939 528)" fill="#d9e6d4"/><ellipse cx="670" cy="684" rx="4" ry="5" transform="rotate(0 670 684)" fill="#d9e6d4"/><ellipse cx="775" cy="700" rx="4" ry="7" transform="rotate(-20 775 700)" fill="#d9e6d4"/><ellipse cx="932" cy="705" rx="4" ry="7" transform="rotate(0 932 705)" fill="#d9e6d4"/><rect x="873" y="563" width="17" height="48" fill="#dadcdc"/><rect x="873" y="603" width="17" height="10" fill="#cfe2c8"/><path d="M484.9 329.1 L498.2 313.6 L522.7 295.8 L542.7 282.4 L548.2 262.4 L553.8 235.8 L576.0 223.6 L599.3 234.7" stroke="#cfe2c8" stroke-width="2.5" fill="none"/><path d="M888.2 564.7 L890.4 611.3 L897.1 655.8 L886.0 695.8 L877.1 711.3 L892.7 751.3 L881.6 775.8 L881.6 798.0" stroke="#d3deda" stroke-width="1.5" fill="none"/><path d="M946.0 186.9 L932.7 209.1 L934.9 246.9 L923.8 273.6 L934.9 309.1 L946.0 322.4" stroke="#dfe6e2" stroke-width="2" fill="none"/><path d="M367.1 664.7 L360.4 646.9 L352.7 611.3 L358.2 593.6 L371.6 575.8" stroke="#dfe3e1" stroke-width="1.5" fill="none"/><path d="M446.0 304.7 L519.3 363.6 L532.7 354.7 L547.1 351.3 L557.1 333.6 L580.4 333.6 L584.9 313.6 L589.3 278.0 L596.0 251.3 L599.3 235.8 L616.0 231.3 L636.0 220.2 L637.1 215.8 L650.4 213.6 L662.7 222.4 L667.1 246.9 L670.4 261.3 L700.4 249.1 L694.9 215.8 L711.6 195.8 L714.9 171.3 L734.9 153.6 L857.1 153.6 L852.7 180.2 L858.2 195.8 L852.7 211.3 L857.1 233.6 L877.1 235.8 L879.3 258.0 L872.7 279.1 L886.0 282.4 L889.3 304.7 L883.8 318.0 L887.1 324.7 L877.1 335.8 L872.7 349.1 L866.0 360.2 L870.4 366.9 L867.1 382.4 L872.7 391.3 L883.8 389.1 L914.9 371.3 L950.4 361.3 L950.4 424.7 L937.1 442.4 L926.0 469.1 L921.6 478.0 L932.7 483.6 L950.4 491.3 L950.4 511.3 L937.1 520.2 L926.0 535.8 L912.7 538.0 L908.2 546.9 L888.2 558.0 L872.7 560.2 L859.3 569.1 L850.4 578.0 L848.2 586.9 L839.3 593.6 L823.8 598.0 L821.6 613.6 L803.8 618.0 L790.4 615.8 L781.6 604.7 L772.7 595.8 L773.8 566.9 L767.1 554.7 L757.1 566.9 L741.6 569.1 L728.2 552.4 L719.3 559.1 L699.3 569.1 L686.0 575.8 L673.8 589.1 L672.7 598.0 L637.1 604.7 L623.8 582.3 L613.9 593.1 L599.5 605.7 L588.6 608.4 L577.8 591.3 L574.2 576.8 L562.4 567.8 L556.1 542.5 L547.1 522.7 L538.1 504.6 L524.9 518.0 L511.6 524.7 L504.9 536.9 L493.8 533.6 L469.3 533.6 L468.2 522.4 L472.7 510.2 L462.7 503.6 L469.3 491.3 L472.7 478.0 L480.4 449.1 L473.8 424.7 L471.6 420.2 L451.6 415.8 L434.9 428.0 L430.4 415.8 L413.8 409.1 L404.9 408.0 L394.9 396.9 L408.2 380.2 L407.1 371.3 L413.8 369.1 L420.4 360.2 L431.6 346.9 L439.3 335.8 L438.2 318.0 Z" fill="#f1f1f1" stroke="#f9f9f9" stroke-width="5" stroke-linejoin="round"/><path d="M519.0 364.0 L533.0 355.0 L547.0 351.0 L557.0 334.0 L569.0 342.0 L583.0 354.0 L605.0 369.0 L636.0 382.0 L668.0 392.0 L670.0 402.0 L664.0 425.0 L647.0 431.0 L652.0 444.0 L653.0 461.0 L620.0 465.0 L610.0 496.0 L600.0 498.0 L587.0 519.0 L576.0 506.0 L572.0 474.0 L556.0 460.0 L554.0 434.0 L555.0 394.0 L540.0 380.0 Z" fill="#f3e4e1"/><path d="M797.1 153.6 L857.1 153.6 L852.7 180.2 L858.2 195.8 L852.7 211.3 L857.1 233.6 L877.1 235.8 L879.3 258.0 L872.7 279.1 L821.6 286.9 L812.7 288.0 L792.7 273.6 L784.9 258.0 L790.4 244.7 L801.6 233.6 L792.7 191.3 Z" fill="#f4e2df"/><path d="M757.1 366.9 L777.1 363.6 L790.4 369.1 L803.8 378.0 L826.0 384.7 L814.9 418.0 L803.8 438.0 L781.6 433.6 L746.0 431.3 L734.9 420.2 L737.1 406.9 L750.4 393.6 Z" fill="#f2d5d2"/><path d="M883.8 389.1 L914.9 371.3 L950.0 361.0 L950.0 424.7 L937.1 442.4 L926.0 469.1 L921.6 478.0 L923.8 464.7 L919.0 447.0 L895.0 438.0 L892.7 418.0 L870.4 431.3 L877.0 403.0 Z" fill="#f3dcd9"/><path d="M696.0 480.0 L702.0 477.0 L719.0 458.0 L737.0 447.0 L739.0 434.0 L749.0 453.0 L755.0 478.0 L769.0 515.0 L777.0 519.0 L786.0 526.0 L804.0 545.0 L833.0 538.0 L846.0 545.0 L855.0 562.0 L859.0 569.0 L850.0 578.0 L848.0 587.0 L839.0 594.0 L824.0 598.0 L822.0 614.0 L804.0 618.0 L790.0 616.0 L782.0 605.0 L775.0 595.0 L774.0 567.0 L767.0 555.0 L757.0 567.0 L742.0 569.0 L728.0 552.0 L719.0 559.0 L708.0 566.0 L706.0 560.0 L704.0 542.0 L698.0 534.0 L700.0 496.0 Z" fill="#f5e6e2"/><path d="M746.0 431.0 L782.0 434.0 L804.0 438.0 L817.0 449.0 L837.0 451.0 L870.0 431.0 L893.0 418.0 L895.0 438.0 L919.0 447.0 L924.0 465.0 L922.0 478.0 L932.0 483.0 L950.0 491.0 L950.0 511.0 L937.0 520.0 L926.0 536.0 L913.0 538.0 L908.0 547.0 L888.0 558.0 L873.0 560.0 L859.0 569.0 L855.0 562.0 L846.0 545.0 L833.0 538.0 L804.0 545.0 L786.0 526.0 L777.0 519.0 L769.0 515.0 L755.0 478.0 L749.0 453.0 L739.0 434.0 Z" fill="#e5cfd5"/><path d="M519.0 362.0 L538.0 378.0 L556.0 392.0 L575.0 404.0 L598.0 412.0 L622.0 416.0 L640.0 422.0 L650.0 436.0 L654.0 455.0 L672.0 470.0 L692.0 479.0 L706.0 470.0 L722.0 452.0 L740.0 441.0 L762.0 434.0 L790.0 436.0 L812.0 446.0 L836.0 451.0 L856.0 440.0 L878.0 425.0 L890.0 410.0 L884.0 392.0 L900.0 380.0 L946.0 356.0" stroke="rgba(120,150,160,0.17)" stroke-width="9" fill="none" stroke-linejoin="round" filter="url(#b2)"/><path d="M670.4 261.3 L652.7 269.1 L653.8 295.8 L641.6 313.6 L639.3 326.9 L626.0 333.6" stroke="#d6d6d6" stroke-width="1" fill="none"/><path d="M700.4 249.1 L690.4 260.2 L699.3 282.4 L703.8 309.1 L697.1 322.4 L723.8 330.2 L732.7 346.9 L750.4 349.1 L756.0 352.4 L757.1 366.9" stroke="#d6d6d6" stroke-width="1" fill="none"/><path d="M734.9 155.8 L748.2 189.1 L741.6 213.6 L750.4 224.7 L768.2 240.2 L784.9 258.0" stroke="#d6d6d6" stroke-width="1" fill="none"/><path d="M700.4 249.1 L719.3 262.4 L737.1 282.4 L750.4 291.3 L777.1 291.3 L792.7 273.6" stroke="#d6d6d6" stroke-width="1" fill="none"/><path d="M821.6 286.9 L823.8 304.7 L812.7 306.9 L801.6 318.0 L781.6 322.4 L772.7 335.8 L756.0 352.4" stroke="#d6d6d6" stroke-width="1" fill="none"/><path d="M823.8 304.7 L820.4 326.9 L830.4 351.3 L832.7 364.7 L848.2 368.0 L866.0 360.2" stroke="#d6d6d6" stroke-width="1" fill="none"/><path d="M832.7 364.7 L826.0 384.7" stroke="#d6d6d6" stroke-width="1" fill="none"/><path d="M756.0 366.9 L714.9 371.3 L679.3 373.6 L670.4 391.3" stroke="#d6d6d6" stroke-width="1" fill="none"/><path d="M670.4 391.3 L672.7 398.0 L699.3 396.9 L721.6 406.9 L732.7 402.4 L737.1 406.9" stroke="#d6d6d6" stroke-width="1" fill="none"/><path d="M659.3 353.6 L679.3 373.6" stroke="#d6d6d6" stroke-width="1" fill="none"/><path d="M639.3 326.9 L659.3 353.6 L648.2 358.0" stroke="#d6d6d6" stroke-width="1" fill="none"/><path d="M653.8 295.8 L664.9 313.6 L666.0 335.8 L659.3 353.6" stroke="#d6d6d6" stroke-width="1" fill="none"/><path d="M530.8 403.5 L534.4 401.7 L543.5 407.1 L556.1 403.5" stroke="#d6d6d6" stroke-width="1" fill="none"/><path d="M530.8 403.5 L532.6 425.1 L529.0 439.6 L538.1 455.8 L547.1 464.9 L556.1 459.5" stroke="#d6d6d6" stroke-width="1" fill="none"/><path d="M547.1 464.9 L543.5 481.1 L538.1 504.6" stroke="#d6d6d6" stroke-width="1" fill="none"/><path d="M548.9 519.1 L572.4 522.7 L583.2 524.5 L586.8 519.1" stroke="#d6d6d6" stroke-width="1" fill="none"/><path d="M583.2 524.5 L594.9 527.2 L595.8 551.6 L604.9 567.8 L613.9 571.4 L623.8 582.3" stroke="#d6d6d6" stroke-width="1" fill="none"/><path d="M471.6 420.2 L480.4 409.1 L489.3 415.8 L500.4 442.4 L529.3 444.7 L532.7 406.9 L538.2 402.4 L554.9 404.7" stroke="#d6d6d6" stroke-width="1" fill="none"/><path d="M816.2 448.6 L819.8 488.4 L825.2 495.6" stroke="#d6d6d6" stroke-width="1" fill="none"/><path d="M446.0 304.7 L519.3 363.6 L532.7 354.7 L547.1 351.3 L557.1 333.6 L580.4 333.6 L584.9 313.6 L589.3 278.0 L596.0 251.3 L599.3 235.8 L616.0 231.3 L636.0 220.2 L637.1 215.8 L650.4 213.6 L662.7 222.4 L667.1 246.9 L670.4 261.3 L700.4 249.1 L694.9 215.8 L711.6 195.8 L714.9 171.3 L734.9 153.6 L857.1 153.6 L852.7 180.2 L858.2 195.8 L852.7 211.3 L857.1 233.6 L877.1 235.8 L879.3 258.0 L872.7 279.1 L886.0 282.4 L889.3 304.7 L883.8 318.0 L887.1 324.7 L877.1 335.8 L872.7 349.1 L866.0 360.2 L870.4 366.9 L867.1 382.4 L872.7 391.3 L883.8 389.1 L914.9 371.3 L950.4 361.3 L950.4 424.7 L937.1 442.4 L926.0 469.1 L921.6 478.0 L932.7 483.6 L950.4 491.3 L950.4 511.3 L937.1 520.2 L926.0 535.8 L912.7 538.0 L908.2 546.9 L888.2 558.0 L872.7 560.2 L859.3 569.1 L850.4 578.0 L848.2 586.9 L839.3 593.6 L823.8 598.0 L821.6 613.6 L803.8 618.0 L790.4 615.8 L781.6 604.7 L772.7 595.8 L773.8 566.9 L767.1 554.7 L757.1 566.9 L741.6 569.1 L728.2 552.4 L719.3 559.1 L699.3 569.1 L686.0 575.8 L673.8 589.1 L672.7 598.0 L637.1 604.7 L623.8 582.3 L613.9 593.1 L599.5 605.7 L588.6 608.4 L577.8 591.3 L574.2 576.8 L562.4 567.8 L556.1 542.5 L547.1 522.7 L538.1 504.6 L524.9 518.0 L511.6 524.7 L504.9 536.9 L493.8 533.6 L469.3 533.6 L468.2 522.4 L472.7 510.2 L462.7 503.6 L469.3 491.3 L472.7 478.0 L480.4 449.1 L473.8 424.7 L471.6 420.2 L451.6 415.8 L434.9 428.0 L430.4 415.8 L413.8 409.1 L404.9 408.0 L394.9 396.9 L408.2 380.2 L407.1 371.3 L413.8 369.1 L420.4 360.2 L431.6 346.9 L439.3 335.8 L438.2 318.0 Z" fill="none" stroke="#a4a4a4" stroke-width="1" stroke-linejoin="round"/><path d="M586.0 608.0 L580.4 615.8 L578.2 631.3 L571.6 644.7 L576.0 660.2 L589.3 662.4 L607.1 651.3 L620.4 669.1 L636.0 678.0 L639.3 678.0 L641.6 700.2 L648.2 713.6" stroke="#c4c8c6" stroke-width="1" fill="none"/><path d="M313.8 306.4 L323.8 309.1 L326.0 318.0 L338.2 329.1 L363.8 329.1 L374.9 350.2 L396.0 335.8 L404.9 341.3 L424.9 340.2 L431.6 345.8" stroke="#fafafa" stroke-width="5" fill="none" stroke-linejoin="round"/><path d="M313.8 306.4 L323.8 309.1 L326.0 318.0 L338.2 329.1 L363.8 329.1 L374.9 350.2 L396.0 335.8 L404.9 341.3 L424.9 340.2 L431.6 345.8" stroke="#4a4a4a" stroke-width="1.8" fill="none" stroke-linejoin="round" stroke-dasharray="14 1.5"/><path d="M394.9 396.9 L391.6 413.6 L389.3 435.8 L386.0 464.7 L367.1 465.8 L360.4 478.0 L362.7 491.3 L360.4 502.4 L362.7 514.7 L380.4 522.4 L389.3 533.6 L398.2 541.3 L412.7 542.4 L413.8 553.6 L409.3 569.1 L398.2 592.4 L401.6 606.9 L399.3 619.1 L389.3 621.3 L377.1 629.1 L378.2 638.0" stroke="#fafafa" stroke-width="5" fill="none" stroke-linejoin="round"/><path d="M394.9 396.9 L391.6 413.6 L389.3 435.8 L386.0 464.7 L367.1 465.8 L360.4 478.0 L362.7 491.3 L360.4 502.4 L362.7 514.7 L380.4 522.4 L389.3 533.6 L398.2 541.3 L412.7 542.4 L413.8 553.6 L409.3 569.1 L398.2 592.4 L401.6 606.9 L399.3 619.1 L389.3 621.3 L377.1 629.1 L378.2 638.0" stroke="#4a4a4a" stroke-width="1.8" fill="none" stroke-linejoin="round" stroke-dasharray="14 1.5"/><text x="768" y="211" font-size="17" fill="#c4c4c4" text-anchor="middle" font-family='"Liberation Sans", sans-serif'>도봉구</text><text x="825" y="228" font-size="17" fill="#c4c4c4" text-anchor="middle" font-family='"Liberation Sans", sans-serif'>노원구</text><text x="730" y="239" font-size="17" fill="#c4c4c4" text-anchor="middle" font-family='"Liberation Sans", sans-serif'>강북구</text><text x="620" y="291" font-size="17" fill="#c4c4c4" text-anchor="middle" font-family='"Liberation Sans", sans-serif'>은평구</text><text x="760" y="309" font-size="17" fill="#c4c4c4" text-anchor="middle" font-family='"Liberation Sans", sans-serif'>성북구</text><text x="676" y="323" font-size="17" fill="#c4c4c4" text-anchor="middle" font-family='"Liberation Sans", sans-serif'>종로구</text><text x="640" y="349" font-size="17" fill="#c4c4c4" text-anchor="middle" font-family='"Liberation Sans", sans-serif'>서대문구</text><text x="796" y="348" font-size="17" fill="#c4c4c4" text-anchor="middle" font-family='"Liberation Sans", sans-serif'>동대문구</text><text x="469" y="383" font-size="17" fill="#c4c4c4" text-anchor="middle" font-family='"Liberation Sans", sans-serif'>강서구</text><text x="581" y="389" font-size="17" fill="#c4c4c4" text-anchor="middle" font-family='"Liberation Sans", sans-serif'>마포구</text><text x="712" y="394" font-size="17" fill="#c4c4c4" text-anchor="middle" font-family='"Liberation Sans", sans-serif'>중구</text><text x="784" y="404" font-size="17" fill="#c4c4c4" text-anchor="middle" font-family='"Liberation Sans", sans-serif'>성동구</text><text x="850" y="410" font-size="17" fill="#c4c4c4" text-anchor="middle" font-family='"Liberation Sans", sans-serif'>광진구</text><text x="925" y="407" font-size="17" fill="#c4c4c4" text-anchor="middle" font-family='"Liberation Sans", sans-serif'>강동구</text><text x="538" y="447" font-size="17" fill="#c4c4c4" text-anchor="middle" font-family='"Liberation Sans", sans-serif'>양천구</text><text x="603" y="460" font-size="17" fill="#c4c4c4" text-anchor="middle" font-family='"Liberation Sans", sans-serif'>영등포구</text><text x="696" y="444" font-size="17" fill="#c4c4c4" text-anchor="middle" font-family='"Liberation Sans", sans-serif'>용산구</text><text x="521" y="502" font-size="17" fill="#c4c4c4" text-anchor="middle" font-family='"Liberation Sans", sans-serif'>구로구</text><text x="742" y="539" font-size="17" fill="#c4c4c4" text-anchor="middle" font-family='"Liberation Sans", sans-serif'>서초구</text><text x="814" y="509" font-size="17" fill="#c4c4c4" text-anchor="middle" font-family='"Liberation Sans", sans-serif'>강남구</text><text x="872" y="490" font-size="17" fill="#c4c4c4" text-anchor="middle" font-family='"Liberation Sans", sans-serif'>송파구</text><text x="582" y="564" font-size="17" fill="#c4c4c4" text-anchor="middle" font-family='"Liberation Sans", sans-serif'>금천구</text><text x="652" y="563" font-size="17" fill="#c4c4c4" text-anchor="middle" font-family='"Liberation Sans", sans-serif'>관악구</text><rect x="608" y="373" width="64" height="17" rx="8" fill="#f0efee" opacity="0.9"/><text x="640" y="386" font-size="13" fill="#dddad8" text-anchor="middle" font-family='"Liberation Sans", sans-serif'>서울특별시</text><path d="M586.8 519.1 L600.4 498.3 L610.3 496.1 L620.2 464.9 L652.7 460.9 L688.8 479.3 L696.1 480.2 L699.7 495.6 L697.9 534.4 L682.5 536.2 L668.4 520.9 L669.9 504.6 L658.1 509.1 L652.7 506.4 L644.6 504.6 L632.0 506.4 L620.2 503.7 L617.5 510.0 L608.5 510.0 L604.0 514.5 Z" fill="#fc9f8f" stroke="#2a2a2a" stroke-width="1.4" stroke-linejoin="round"/><text x="651" y="504" font-size="17" fill="#111" text-anchor="middle" font-family='"Liberation Sans", sans-serif'>동작구</text></svg>
<div style="position:absolute;left:319.0px;top:772.0px;width:252.0px;height:21.0px;background:rgba(255,255,255,0.72);"></div>
<div style="position:absolute;top:772.5px;height:21px;line-height:21px;font-size:16px;color:#5c5c5c;white-space:nowrap;left:321.0px;">© 2025 Mapbox © OpenStreetMap</div>
<svg style="position:absolute;left:0;top:0" width="2309" height="800" viewBox="0 0 2309 800"><path d="M954 80.5H2158.5V797" stroke="#cfcfcf" stroke-width="1" fill="none"/><path d="M1070.5 80.5V797" stroke="#cfcfcf" stroke-width="1" fill="none"/><path d="M954 421.5H2158.5M954 762.5H2158.5" stroke="#cfcfcf" stroke-width="1" fill="none"/><path d="M1071.5 340.0H2157.5" stroke="#ececec" stroke-width="1"/><path d="M1071.5 258.7H2157.5" stroke="#ececec" stroke-width="1"/><path d="M1071.5 177.3H2157.5" stroke="#ececec" stroke-width="1"/><path d="M1071.5 96.0H2157.5" stroke="#ececec" stroke-width="1"/><path d="M1071.5 699.9H2157.5" stroke="#ececec" stroke-width="1"/><path d="M1071.5 637.7H2157.5" stroke="#ececec" stroke-width="1"/><path d="M1071.5 575.4H2157.5" stroke="#ececec" stroke-width="1"/><path d="M1071.5 513.2H2157.5" stroke="#ececec" stroke-width="1"/><path d="M1071.5 450.9H2157.5" stroke="#ececec" stroke-width="1"/><path d="M1122.5 137.2 L1199.7 164.8 L1274.5 146.3 L1351.7 139.7 L1428.9 146.7 L1503.6 149.0 L1580.8 139.2 L1655.6 176.5 L1732.8 152.6 L1810.0 116.2 L1879.8 130.2 L1957.0 121.8 L2031.7 97.6" stroke="#4e79a7" stroke-width="2.2" fill="none" stroke-linejoin="round"/><circle cx="1122.5" cy="137.2" r="2.6" fill="#4e79a7"/><circle cx="1199.7" cy="164.8" r="2.6" fill="#4e79a7"/><circle cx="1274.5" cy="146.3" r="2.6" fill="#4e79a7"/><circle cx="1351.7" cy="139.7" r="2.6" fill="#4e79a7"/><circle cx="1428.9" cy="146.7" r="2.6" fill="#4e79a7"/><circle cx="1503.6" cy="149.0" r="2.6" fill="#4e79a7"/><circle cx="1580.8" cy="139.2" r="2.6" fill="#4e79a7"/><circle cx="1655.6" cy="176.5" r="2.6" fill="#4e79a7"/><circle cx="1732.8" cy="152.6" r="2.6" fill="#4e79a7"/><circle cx="1810.0" cy="116.2" r="2.6" fill="#4e79a7"/><circle cx="1879.8" cy="130.2" r="2.6" fill="#4e79a7"/><circle cx="1957.0" cy="121.8" r="2.6" fill="#4e79a7"/><circle cx="2031.7" cy="97.6" r="2.6" fill="#4e79a7"/><path d="M1122.5 257.7 L1199.7 251.8 L1274.5 245.6 L1351.7 254.2 L1428.9 274.2 L1503.6 265.0 L1580.8 265.0 L1655.6 255.9 L1732.8 257.3 L1810.0 253.9 L1879.8 258.6 L1957.0 261.4 L2031.7 263.7" stroke="#8cd17d" stroke-width="2.2" fill="none" stroke-linejoin="round"/><circle cx="1122.5" cy="257.7" r="2.6" fill="#8cd17d"/><circle cx="1199.7" cy="251.8" r="2.6" fill="#8cd17d"/><circle cx="1274.5" cy="245.6" r="2.6" fill="#8cd17d"/><circle cx="1351.7" cy="254.2" r="2.6" fill="#8cd17d"/><circle cx="1428.9" cy="274.2" r="2.6" fill="#8cd17d"/><circle cx="1503.6" cy="265.0" r="2.6" fill="#8cd17d"/><circle cx="1580.8" cy="265.0" r="2.6" fill="#8cd17d"/><circle cx="1655.6" cy="255.9" r="2.6" fill="#8cd17d"/><circle cx="1732.8" cy="257.3" r="2.6" fill="#8cd17d"/><circle cx="1810.0" cy="253.9" r="2.6" fill="#8cd17d"/><circle cx="1879.8" cy="258.6" r="2.6" fill="#8cd17d"/><circle cx="1957.0" cy="261.4" r="2.6" fill="#8cd17d"/><circle cx="2031.7" cy="263.7" r="2.6" fill="#8cd17d"/><path d="M1122.5 219.9 L1199.7 218.2 L1274.5 218.8 L1351.7 215.8 L1428.9 212.6 L1503.6 211.4 L1580.8 216.5 L1655.6 233.3 L1732.8 210.2 L1810.0 209.2 L1879.8 205.4 L1957.0 216.4 L2031.7 197.2" stroke="#79706e" stroke-width="2.2" fill="none" stroke-linejoin="round"/><circle cx="1122.5" cy="219.9" r="2.6" fill="#79706e"/><circle cx="1199.7" cy="218.2" r="2.6" fill="#79706e"/><circle cx="1274.5" cy="218.8" r="2.6" fill="#79706e"/><circle cx="1351.7" cy="215.8" r="2.6" fill="#79706e"/><circle cx="1428.9" cy="212.6" r="2.6" fill="#79706e"/><circle cx="1503.6" cy="211.4" r="2.6" fill="#79706e"/><circle cx="1580.8" cy="216.5" r="2.6" fill="#79706e"/><circle cx="1655.6" cy="233.3" r="2.6" fill="#79706e"/><circle cx="1732.8" cy="210.2" r="2.6" fill="#79706e"/><circle cx="1810.0" cy="209.2" r="2.6" fill="#79706e"/><circle cx="1879.8" cy="205.4" r="2.6" fill="#79706e"/><circle cx="1957.0" cy="216.4" r="2.6" fill="#79706e"/><circle cx="2031.7" cy="197.2" r="2.6" fill="#79706e"/><path d="M1122.5 246.5 L1199.7 247.3 L1274.5 231.3 L1351.7 234.1 L1428.9 246.0 L1503.6 244.2 L1580.8 252.2 L1655.6 247.8 L1732.8 238.4 L1810.0 239.1 L1879.8 227.2 L1957.0 225.1 L2031.7 117.1" stroke="#b6992d" stroke-width="2.2" fill="none" stroke-linejoin="round"/><circle cx="1122.5" cy="246.5" r="2.6" fill="#b6992d"/><circle cx="1199.7" cy="247.3" r="2.6" fill="#b6992d"/><circle cx="1274.5" cy="231.3" r="2.6" fill="#b6992d"/><circle cx="1351.7" cy="234.1" r="2.6" fill="#b6992d"/><circle cx="1428.9" cy="246.0" r="2.6" fill="#b6992d"/><circle cx="1503.6" cy="244.2" r="2.6" fill="#b6992d"/><circle cx="1580.8" cy="252.2" r="2.6" fill="#b6992d"/><circle cx="1655.6" cy="247.8" r="2.6" fill="#b6992d"/><circle cx="1732.8" cy="238.4" r="2.6" fill="#b6992d"/><circle cx="1810.0" cy="239.1" r="2.6" fill="#b6992d"/><circle cx="1879.8" cy="227.2" r="2.6" fill="#b6992d"/><circle cx="1957.0" cy="225.1" r="2.6" fill="#b6992d"/><circle cx="2031.7" cy="117.1" r="2.6" fill="#b6992d"/><path d="M1122.5 268.7 L1199.7 217.0 L1274.5 251.7 L1351.7 262.6 L1428.9 227.7 L1503.6 252.5 L1580.8 230.9 L1655.6 222.6 L1732.8 266.2 L1810.0 231.2 L1879.8 194.0 L1957.0 229.9 L2031.7 274.9" stroke="#4e79a7" stroke-width="2.2" fill="none" stroke-linejoin="round"/><circle cx="1122.5" cy="268.7" r="2.6" fill="#4e79a7"/><circle cx="1199.7" cy="217.0" r="2.6" fill="#4e79a7"/><circle cx="1274.5" cy="251.7" r="2.6" fill="#4e79a7"/><circle cx="1351.7" cy="262.6" r="2.6" fill="#4e79a7"/><circle cx="1428.9" cy="227.7" r="2.6" fill="#4e79a7"/><circle cx="1503.6" cy="252.5" r="2.6" fill="#4e79a7"/><circle cx="1580.8" cy="230.9" r="2.6" fill="#4e79a7"/><circle cx="1655.6" cy="222.6" r="2.6" fill="#4e79a7"/><circle cx="1732.8" cy="266.2" r="2.6" fill="#4e79a7"/><circle cx="1810.0" cy="231.2" r="2.6" fill="#4e79a7"/><circle cx="1879.8" cy="194.0" r="2.6" fill="#4e79a7"/><circle cx="1957.0" cy="229.9" r="2.6" fill="#4e79a7"/><circle cx="2031.7" cy="274.9" r="2.6" fill="#4e79a7"/><path d="M1122.5 209.5 L1199.7 209.4 L1274.5 203.7 L1351.7 177.5 L1503.6 104.1 L1580.8 198.8 L1655.6 198.5 L1732.8 198.1 L1810.0 157.8 L1879.8 178.3 L1957.0 148.1" stroke="#ffbe7d" stroke-width="2.2" fill="none" stroke-linejoin="round"/><circle cx="1122.5" cy="209.5" r="2.6" fill="#ffbe7d"/><circle cx="1199.7" cy="209.4" r="2.6" fill="#ffbe7d"/><circle cx="1274.5" cy="203.7" r="2.6" fill="#ffbe7d"/><circle cx="1351.7" cy="177.5" r="2.6" fill="#ffbe7d"/><circle cx="1503.6" cy="104.1" r="2.6" fill="#ffbe7d"/><circle cx="1580.8" cy="198.8" r="2.6" fill="#ffbe7d"/><circle cx="1655.6" cy="198.5" r="2.6" fill="#ffbe7d"/><circle cx="1732.8" cy="198.1" r="2.6" fill="#ffbe7d"/><circle cx="1810.0" cy="157.8" r="2.6" fill="#ffbe7d"/><circle cx="1879.8" cy="178.3" r="2.6" fill="#ffbe7d"/><circle cx="1957.0" cy="148.1" r="2.6" fill="#ffbe7d"/><path d="M1122.5 277.8 L1199.7 223.5 L1274.5 244.3 L1351.7 225.7 L1428.9 261.0 L1503.6 258.1 L1580.8 267.9 L1655.6 274.1 L1732.8 254.1 L1810.0 230.7 L1879.8 245.9 L1957.0 241.2 L2031.7 262.7" stroke="#8cd17d" stroke-width="2.2" fill="none" stroke-linejoin="round"/><circle cx="1122.5" cy="277.8" r="2.6" fill="#8cd17d"/><circle cx="1199.7" cy="223.5" r="2.6" fill="#8cd17d"/><circle cx="1274.5" cy="244.3" r="2.6" fill="#8cd17d"/><circle cx="1351.7" cy="225.7" r="2.6" fill="#8cd17d"/><circle cx="1428.9" cy="261.0" r="2.6" fill="#8cd17d"/><circle cx="1503.6" cy="258.1" r="2.6" fill="#8cd17d"/><circle cx="1580.8" cy="267.9" r="2.6" fill="#8cd17d"/><circle cx="1655.6" cy="274.1" r="2.6" fill="#8cd17d"/><circle cx="1732.8" cy="254.1" r="2.6" fill="#8cd17d"/><circle cx="1810.0" cy="230.7" r="2.6" fill="#8cd17d"/><circle cx="1879.8" cy="245.9" r="2.6" fill="#8cd17d"/><circle cx="1957.0" cy="241.2" r="2.6" fill="#8cd17d"/><circle cx="2031.7" cy="262.7" r="2.6" fill="#8cd17d"/><path d="M1122.5 270.8 L1199.7 266.9 L1274.5 247.6 L1351.7 246.2 L1428.9 252.6 L1503.6 255.2 L1580.8 253.9 L1655.6 247.7 L1732.8 252.9 L1810.0 241.8 L1879.8 247.5 L1957.0 240.5 L2031.7 226.5" stroke="#d37295" stroke-width="2.2" fill="none" stroke-linejoin="round"/><circle cx="1122.5" cy="270.8" r="2.6" fill="#d37295"/><circle cx="1199.7" cy="266.9" r="2.6" fill="#d37295"/><circle cx="1274.5" cy="247.6" r="2.6" fill="#d37295"/><circle cx="1351.7" cy="246.2" r="2.6" fill="#d37295"/><circle cx="1428.9" cy="252.6" r="2.6" fill="#d37295"/><circle cx="1503.6" cy="255.2" r="2.6" fill="#d37295"/><circle cx="1580.8" cy="253.9" r="2.6" fill="#d37295"/><circle cx="1655.6" cy="247.7" r="2.6" fill="#d37295"/><circle cx="1732.8" cy="252.9" r="2.6" fill="#d37295"/><circle cx="1810.0" cy="241.8" r="2.6" fill="#d37295"/><circle cx="1879.8" cy="247.5" r="2.6" fill="#d37295"/><circle cx="1957.0" cy="240.5" r="2.6" fill="#d37295"/><circle cx="2031.7" cy="226.5" r="2.6" fill="#d37295"/><rect x="1122.5" y="752.9" width="77.2" height="9.3" fill="#4e79a7" stroke="#f3efe6" stroke-width="0.8"/><rect x="1122.5" y="744.1" width="77.2" height="8.7" fill="#8cd17d" stroke="#f3efe6" stroke-width="0.8"/><rect x="1122.5" y="730.4" width="77.2" height="13.7" fill="#79706e" stroke="#f3efe6" stroke-width="0.8"/><rect x="1122.5" y="716.8" width="77.2" height="13.7" fill="#b6992d" stroke="#f3efe6" stroke-width="0.8"/><rect x="1122.5" y="712.4" width="77.2" height="4.4" fill="#4e79a7" stroke="#f3efe6" stroke-width="0.8"/><rect x="1122.5" y="706.8" width="77.2" height="5.6" fill="#ffbe7d" stroke="#f3efe6" stroke-width="0.8"/><rect x="1122.5" y="701.2" width="77.2" height="5.6" fill="#d37295" stroke="#f3efe6" stroke-width="0.8"/><rect x="1199.7" y="732.3" width="74.7" height="29.9" fill="#4e79a7" stroke="#f3efe6" stroke-width="0.8"/><rect x="1199.7" y="712.4" width="74.7" height="19.9" fill="#8cd17d" stroke="#f3efe6" stroke-width="0.8"/><rect x="1199.7" y="657.0" width="74.7" height="55.4" fill="#79706e" stroke="#f3efe6" stroke-width="0.8"/><rect x="1199.7" y="604.1" width="74.7" height="52.9" fill="#b6992d" stroke="#f3efe6" stroke-width="0.8"/><rect x="1199.7" y="596.0" width="74.7" height="8.1" fill="#4e79a7" stroke="#f3efe6" stroke-width="0.8"/><rect x="1199.7" y="589.7" width="74.7" height="6.2" fill="#ffbe7d" stroke="#f3efe6" stroke-width="0.8"/><rect x="1199.7" y="578.5" width="74.7" height="11.2" fill="#8cd17d" stroke="#f3efe6" stroke-width="0.8"/><rect x="1199.7" y="567.3" width="74.7" height="11.2" fill="#d37295" stroke="#f3efe6" stroke-width="0.8"/><rect x="1274.5" y="719.9" width="77.2" height="42.3" fill="#4e79a7" stroke="#f3efe6" stroke-width="0.8"/><rect x="1274.5" y="699.3" width="77.2" height="20.5" fill="#8cd17d" stroke="#f3efe6" stroke-width="0.8"/><rect x="1274.5" y="619.0" width="77.2" height="80.3" fill="#79706e" stroke="#f3efe6" stroke-width="0.8"/><rect x="1274.5" y="552.4" width="77.2" height="66.6" fill="#b6992d" stroke="#f3efe6" stroke-width="0.8"/><rect x="1274.5" y="537.4" width="77.2" height="14.9" fill="#4e79a7" stroke="#f3efe6" stroke-width="0.8"/><rect x="1274.5" y="523.1" width="77.2" height="14.3" fill="#ffbe7d" stroke="#f3efe6" stroke-width="0.8"/><rect x="1274.5" y="508.8" width="77.2" height="14.3" fill="#8cd17d" stroke="#f3efe6" stroke-width="0.8"/><rect x="1274.5" y="500.1" width="77.2" height="8.7" fill="#d37295" stroke="#f3efe6" stroke-width="0.8"/><rect x="1351.7" y="744.1" width="77.2" height="18.1" fill="#4e79a7" stroke="#f3efe6" stroke-width="0.8"/><rect x="1351.7" y="731.1" width="77.2" height="13.1" fill="#8cd17d" stroke="#f3efe6" stroke-width="0.8"/><rect x="1351.7" y="693.1" width="77.2" height="38.0" fill="#79706e" stroke="#f3efe6" stroke-width="0.8"/><rect x="1351.7" y="650.1" width="77.2" height="43.0" fill="#b6992d" stroke="#f3efe6" stroke-width="0.8"/><rect x="1351.7" y="645.8" width="77.2" height="4.4" fill="#4e79a7" stroke="#f3efe6" stroke-width="0.8"/><rect x="1351.7" y="643.3" width="77.2" height="2.5" fill="#ffbe7d" stroke="#f3efe6" stroke-width="0.8"/><rect x="1351.7" y="637.1" width="77.2" height="6.2" fill="#8cd17d" stroke="#f3efe6" stroke-width="0.8"/><rect x="1351.7" y="630.8" width="77.2" height="6.2" fill="#d37295" stroke="#f3efe6" stroke-width="0.8"/><rect x="1428.9" y="751.0" width="74.7" height="11.2" fill="#4e79a7" stroke="#f3efe6" stroke-width="0.8"/><rect x="1428.9" y="743.5" width="74.7" height="7.5" fill="#8cd17d" stroke="#f3efe6" stroke-width="0.8"/><rect x="1428.9" y="729.2" width="74.7" height="14.3" fill="#79706e" stroke="#f3efe6" stroke-width="0.8"/><rect x="1428.9" y="709.3" width="74.7" height="19.9" fill="#b6992d" stroke="#f3efe6" stroke-width="0.8"/><rect x="1428.9" y="706.8" width="74.7" height="2.5" fill="#4e79a7" stroke="#f3efe6" stroke-width="0.8"/><rect x="1428.9" y="705.5" width="74.7" height="1.2" fill="#ffbe7d" stroke="#f3efe6" stroke-width="0.8"/><rect x="1428.9" y="703.7" width="74.7" height="1.9" fill="#8cd17d" stroke="#f3efe6" stroke-width="0.8"/><rect x="1428.9" y="702.4" width="74.7" height="1.2" fill="#d37295" stroke="#f3efe6" stroke-width="0.8"/><rect x="1503.6" y="754.1" width="77.2" height="8.1" fill="#4e79a7" stroke="#f3efe6" stroke-width="0.8"/><rect x="1503.6" y="740.4" width="77.2" height="13.7" fill="#8cd17d" stroke="#f3efe6" stroke-width="0.8"/><rect x="1503.6" y="720.5" width="77.2" height="19.9" fill="#79706e" stroke="#f3efe6" stroke-width="0.8"/><rect x="1503.6" y="697.4" width="77.2" height="23.0" fill="#b6992d" stroke="#f3efe6" stroke-width="0.8"/><rect x="1503.6" y="691.8" width="77.2" height="5.6" fill="#4e79a7" stroke="#f3efe6" stroke-width="0.8"/><rect x="1503.6" y="690.6" width="77.2" height="1.2" fill="#ffbe7d" stroke="#f3efe6" stroke-width="0.8"/><rect x="1503.6" y="683.8" width="77.2" height="6.8" fill="#8cd17d" stroke="#f3efe6" stroke-width="0.8"/><rect x="1503.6" y="678.1" width="77.2" height="5.6" fill="#d37295" stroke="#f3efe6" stroke-width="0.8"/><rect x="1580.8" y="756.6" width="74.7" height="5.6" fill="#4e79a7" stroke="#f3efe6" stroke-width="0.8"/><rect x="1580.8" y="751.0" width="74.7" height="5.6" fill="#8cd17d" stroke="#f3efe6" stroke-width="0.8"/><rect x="1580.8" y="732.3" width="74.7" height="18.7" fill="#79706e" stroke="#f3efe6" stroke-width="0.8"/><rect x="1580.8" y="704.9" width="74.7" height="27.4" fill="#b6992d" stroke="#f3efe6" stroke-width="0.8"/><rect x="1580.8" y="698.7" width="74.7" height="6.2" fill="#4e79a7" stroke="#f3efe6" stroke-width="0.8"/><rect x="1580.8" y="696.2" width="74.7" height="2.5" fill="#ffbe7d" stroke="#f3efe6" stroke-width="0.8"/><rect x="1580.8" y="691.8" width="74.7" height="4.4" fill="#8cd17d" stroke="#f3efe6" stroke-width="0.8"/><rect x="1580.8" y="688.1" width="74.7" height="3.7" fill="#d37295" stroke="#f3efe6" stroke-width="0.8"/><rect x="1655.6" y="743.5" width="77.2" height="18.7" fill="#4e79a7" stroke="#f3efe6" stroke-width="0.8"/><rect x="1655.6" y="729.2" width="77.2" height="14.3" fill="#8cd17d" stroke="#f3efe6" stroke-width="0.8"/><rect x="1655.6" y="710.5" width="77.2" height="18.7" fill="#79706e" stroke="#f3efe6" stroke-width="0.8"/><rect x="1655.6" y="695.6" width="77.2" height="14.9" fill="#b6992d" stroke="#f3efe6" stroke-width="0.8"/><rect x="1655.6" y="693.1" width="77.2" height="2.5" fill="#4e79a7" stroke="#f3efe6" stroke-width="0.8"/><rect x="1655.6" y="691.2" width="77.2" height="1.9" fill="#ffbe7d" stroke="#f3efe6" stroke-width="0.8"/><rect x="1655.6" y="687.5" width="77.2" height="3.7" fill="#8cd17d" stroke="#f3efe6" stroke-width="0.8"/><rect x="1655.6" y="682.5" width="77.2" height="5.0" fill="#d37295" stroke="#f3efe6" stroke-width="0.8"/><rect x="1732.8" y="748.5" width="77.2" height="13.7" fill="#4e79a7" stroke="#f3efe6" stroke-width="0.8"/><rect x="1732.8" y="740.4" width="77.2" height="8.1" fill="#8cd17d" stroke="#f3efe6" stroke-width="0.8"/><rect x="1732.8" y="713.6" width="77.2" height="26.8" fill="#79706e" stroke="#f3efe6" stroke-width="0.8"/><rect x="1732.8" y="690.0" width="77.2" height="23.7" fill="#b6992d" stroke="#f3efe6" stroke-width="0.8"/><rect x="1732.8" y="687.5" width="77.2" height="2.5" fill="#4e79a7" stroke="#f3efe6" stroke-width="0.8"/><rect x="1732.8" y="685.0" width="77.2" height="2.5" fill="#ffbe7d" stroke="#f3efe6" stroke-width="0.8"/><rect x="1732.8" y="678.1" width="77.2" height="6.8" fill="#8cd17d" stroke="#f3efe6" stroke-width="0.8"/><rect x="1732.8" y="672.5" width="77.2" height="5.6" fill="#d37295" stroke="#f3efe6" stroke-width="0.8"/><rect x="1810.0" y="733.6" width="69.7" height="28.6" fill="#4e79a7" stroke="#f3efe6" stroke-width="0.8"/><rect x="1810.0" y="714.3" width="69.7" height="19.3" fill="#8cd17d" stroke="#f3efe6" stroke-width="0.8"/><rect x="1810.0" y="672.5" width="69.7" height="41.7" fill="#79706e" stroke="#f3efe6" stroke-width="0.8"/><rect x="1810.0" y="624.0" width="69.7" height="48.6" fill="#b6992d" stroke="#f3efe6" stroke-width="0.8"/><rect x="1810.0" y="615.3" width="69.7" height="8.7" fill="#4e79a7" stroke="#f3efe6" stroke-width="0.8"/><rect x="1810.0" y="612.2" width="69.7" height="3.1" fill="#ffbe7d" stroke="#f3efe6" stroke-width="0.8"/><rect x="1810.0" y="603.4" width="69.7" height="8.7" fill="#8cd17d" stroke="#f3efe6" stroke-width="0.8"/><rect x="1810.0" y="589.7" width="69.7" height="13.7" fill="#d37295" stroke="#f3efe6" stroke-width="0.8"/><rect x="1879.8" y="707.4" width="77.2" height="54.8" fill="#4e79a7" stroke="#f3efe6" stroke-width="0.8"/><rect x="1879.8" y="687.5" width="77.2" height="19.9" fill="#8cd17d" stroke="#f3efe6" stroke-width="0.8"/><rect x="1879.8" y="596.0" width="77.2" height="91.5" fill="#79706e" stroke="#f3efe6" stroke-width="0.8"/><rect x="1879.8" y="498.8" width="77.2" height="97.1" fill="#b6992d" stroke="#f3efe6" stroke-width="0.8"/><rect x="1879.8" y="490.1" width="77.2" height="8.7" fill="#4e79a7" stroke="#f3efe6" stroke-width="0.8"/><rect x="1879.8" y="482.7" width="77.2" height="7.5" fill="#ffbe7d" stroke="#f3efe6" stroke-width="0.8"/><rect x="1879.8" y="459.6" width="77.2" height="23.0" fill="#8cd17d" stroke="#f3efe6" stroke-width="0.8"/><rect x="1879.8" y="439.1" width="77.2" height="20.5" fill="#d37295" stroke="#f3efe6" stroke-width="0.8"/><rect x="1957.0" y="736.1" width="74.7" height="26.1" fill="#4e79a7" stroke="#f3efe6" stroke-width="0.8"/><rect x="1957.0" y="723.6" width="74.7" height="12.5" fill="#8cd17d" stroke="#f3efe6" stroke-width="0.8"/><rect x="1957.0" y="685.0" width="74.7" height="38.6" fill="#79706e" stroke="#f3efe6" stroke-width="0.8"/><rect x="1957.0" y="651.4" width="74.7" height="33.6" fill="#b6992d" stroke="#f3efe6" stroke-width="0.8"/><rect x="1957.0" y="635.8" width="74.7" height="15.6" fill="#4e79a7" stroke="#f3efe6" stroke-width="0.8"/><rect x="1957.0" y="632.7" width="74.7" height="3.1" fill="#ffbe7d" stroke="#f3efe6" stroke-width="0.8"/><rect x="1957.0" y="622.7" width="74.7" height="10.0" fill="#8cd17d" stroke="#f3efe6" stroke-width="0.8"/><rect x="1957.0" y="612.8" width="74.7" height="10.0" fill="#d37295" stroke="#f3efe6" stroke-width="0.8"/><rect x="2031.7" y="751.2" width="77.2" height="5" fill="#d2d4d4"/><rect x="2031.7" y="756.2" width="77.2" height="1.6" fill="#6e7b64"/><rect x="2031.7" y="757.8" width="77.2" height="2.4" fill="#93cc85"/><rect x="2031.7" y="760.2" width="77.2" height="2" fill="#c9d8c4"/></svg>
<div style="position:absolute;top:734.9px;height:25px;line-height:25px;font-size:19px;color:#f2f2f2;white-space:nowrap;left:1207.1px;width:60px;text-align:center;">48</div>
<div style="position:absolute;top:672.3px;height:25px;line-height:25px;font-size:19px;color:#f2f2f2;white-space:nowrap;left:1207.1px;width:60px;text-align:center;">89</div>
<div style="position:absolute;top:618.1px;height:25px;line-height:25px;font-size:19px;color:#1a1a1a;white-space:nowrap;left:1207.1px;width:60px;text-align:center;">85</div>
<div style="position:absolute;top:728.6px;height:25px;line-height:25px;font-size:19px;color:#f2f2f2;white-space:nowrap;left:1283.1px;width:60px;text-align:center;">68</div>
<div style="position:absolute;top:646.8px;height:25px;line-height:25px;font-size:19px;color:#f2f2f2;white-space:nowrap;left:1283.1px;width:60px;text-align:center;">129</div>
<div style="position:absolute;top:573.3px;height:25px;line-height:25px;font-size:19px;color:#1a1a1a;white-space:nowrap;left:1283.1px;width:60px;text-align:center;">107</div>
<div style="position:absolute;top:699.7px;height:25px;line-height:25px;font-size:19px;color:#f2f2f2;white-space:nowrap;left:1360.3px;width:60px;text-align:center;">61</div>
<div style="position:absolute;top:659.2px;height:25px;line-height:25px;font-size:19px;color:#1a1a1a;white-space:nowrap;left:1360.3px;width:60px;text-align:center;">69</div>
<div style="position:absolute;top:735.5px;height:25px;line-height:25px;font-size:19px;color:#f2f2f2;white-space:nowrap;left:1814.9px;width:60px;text-align:center;">46</div>
<div style="position:absolute;top:681.0px;height:25px;line-height:25px;font-size:19px;color:#f2f2f2;white-space:nowrap;left:1814.9px;width:60px;text-align:center;">67</div>
<div style="position:absolute;top:635.9px;height:25px;line-height:25px;font-size:19px;color:#1a1a1a;white-space:nowrap;left:1814.9px;width:60px;text-align:center;">78</div>
<div style="position:absolute;top:722.4px;height:25px;line-height:25px;font-size:19px;color:#f2f2f2;white-space:nowrap;left:1888.4px;width:60px;text-align:center;">88</div>
<div style="position:absolute;top:629.3px;height:25px;line-height:25px;font-size:19px;color:#f2f2f2;white-space:nowrap;left:1888.4px;width:60px;text-align:center;">147</div>
<div style="position:absolute;top:535.0px;height:25px;line-height:25px;font-size:19px;color:#1a1a1a;white-space:nowrap;left:1888.4px;width:60px;text-align:center;">156</div>
<div style="position:absolute;top:736.7px;height:25px;line-height:25px;font-size:19px;color:#f2f2f2;white-space:nowrap;left:1964.4px;width:60px;text-align:center;">42</div>
<div style="position:absolute;top:691.9px;height:25px;line-height:25px;font-size:19px;color:#f2f2f2;white-space:nowrap;left:1964.4px;width:60px;text-align:center;">62</div>
<div style="position:absolute;top:655.8px;height:25px;line-height:25px;font-size:19px;color:#1a1a1a;white-space:nowrap;left:1964.4px;width:60px;text-align:center;">54</div>
<div style="position:absolute;top:83.6px;height:25px;line-height:25px;font-size:19px;color:#555;white-space:nowrap;left:962.0px;width:100px;text-align:right;">200,000</div>
<div style="position:absolute;top:164.9px;height:25px;line-height:25px;font-size:19px;color:#555;white-space:nowrap;left:962.0px;width:100px;text-align:right;">150,000</div>
<div style="position:absolute;top:246.3px;height:25px;line-height:25px;font-size:19px;color:#555;white-space:nowrap;left:962.0px;width:100px;text-align:right;">100,000</div>
<div style="position:absolute;top:327.6px;height:25px;line-height:25px;font-size:19px;color:#555;white-space:nowrap;left:962.0px;width:100px;text-align:right;">50,000</div>
<div style="position:absolute;top:395.1px;height:25px;line-height:25px;font-size:19px;color:#555;white-space:nowrap;left:962.0px;width:100px;text-align:right;">0</div>
<div style="position:absolute;top:687.5px;height:25px;line-height:25px;font-size:19px;color:#555;white-space:nowrap;left:962.0px;width:100px;text-align:right;">100</div>
<div style="position:absolute;top:625.3px;height:25px;line-height:25px;font-size:19px;color:#555;white-space:nowrap;left:962.0px;width:100px;text-align:right;">200</div>
<div style="position:absolute;top:563.0px;height:25px;line-height:25px;font-size:19px;color:#555;white-space:nowrap;left:962.0px;width:100px;text-align:right;">300</div>
<div style="position:absolute;top:500.8px;height:25px;line-height:25px;font-size:19px;color:#555;white-space:nowrap;left:962.0px;width:100px;text-align:right;">400</div>
<div style="position:absolute;top:438.5px;height:25px;line-height:25px;font-size:19px;color:#555;white-space:nowrap;left:962.0px;width:100px;text-align:right;">500</div>
<div style="position:absolute;top:736.6px;height:25px;line-height:25px;font-size:19px;color:#555;white-space:nowrap;left:962.0px;width:100px;text-align:right;">0</div>
<div style="position:absolute;left:865px;top:237px;width:220px;height:24px;line-height:24px;font-size:18px;color:#555;text-align:center;white-space:nowrap;transform:rotate(-90deg)">평균 거래금액(만원)</div>
<div style="position:absolute;left:865px;top:580px;width:220px;height:24px;line-height:24px;font-size:18px;color:#555;text-align:center;white-space:nowrap;transform:rotate(-90deg)">매매 거래량</div>
<div style="position:absolute;top:770.5px;height:25px;line-height:25px;font-size:19px;color:#555;white-space:nowrap;left:1051.5px;width:140px;text-align:center;">2024년 5월</div>
<div style="position:absolute;top:770.5px;height:25px;line-height:25px;font-size:19px;color:#555;white-space:nowrap;left:1203.5px;width:140px;text-align:center;">2024년 7월</div>
<div style="position:absolute;top:770.5px;height:25px;line-height:25px;font-size:19px;color:#555;white-space:nowrap;left:1357.9px;width:140px;text-align:center;">2024년 9월</div>
<div style="position:absolute;top:770.5px;height:25px;line-height:25px;font-size:19px;color:#555;white-space:nowrap;left:1509.8px;width:140px;text-align:center;">2024년 11월</div>
<div style="position:absolute;top:770.5px;height:25px;line-height:25px;font-size:19px;color:#555;white-space:nowrap;left:1661.8px;width:140px;text-align:center;">2025년 1월</div>
<div style="position:absolute;top:770.5px;height:25px;line-height:25px;font-size:19px;color:#555;white-space:nowrap;left:1808.8px;width:140px;text-align:center;">2025년 3월</div>
<div style="position:absolute;top:770.5px;height:25px;line-height:25px;font-size:19px;color:#555;white-space:nowrap;left:1960.7px;width:140px;text-align:center;">2025년 5월</div>
<div style="position:absolute;top:82.0px;height:23px;line-height:23px;font-size:18px;color:#555;white-space:nowrap;left:2168.0px;">법정동</div>
<div style="position:absolute;left:2172.0px;top:111.5px;width:14.0px;height:13.0px;background:#d37295;"></div>
<div style="position:absolute;top:107.5px;height:23px;line-height:23px;font-size:18px;color:#555;white-space:nowrap;left:2194.0px;">노량진동</div>
<div style="position:absolute;left:2172.0px;top:136.5px;width:14.0px;height:13.0px;background:#8cd17d;"></div>
<div style="position:absolute;top:132.5px;height:23px;line-height:23px;font-size:18px;color:#555;white-space:nowrap;left:2194.0px;">대방동</div>
<div style="position:absolute;left:2172.0px;top:161.5px;width:14.0px;height:13.0px;background:#ffbe7d;"></div>
<div style="position:absolute;top:157.5px;height:23px;line-height:23px;font-size:18px;color:#555;white-space:nowrap;left:2194.0px;">동작동</div>
<div style="position:absolute;left:2172.0px;top:186.5px;width:14.0px;height:13.0px;background:#4e79a7;"></div>
<div style="position:absolute;top:182.5px;height:23px;line-height:23px;font-size:18px;color:#555;white-space:nowrap;left:2194.0px;">본동</div>
<div style="position:absolute;left:2172.0px;top:211.5px;width:14.0px;height:13.0px;background:#b6992d;"></div>
<div style="position:absolute;top:207.5px;height:23px;line-height:23px;font-size:18px;color:#555;white-space:nowrap;left:2194.0px;">사당동</div>
<div style="position:absolute;left:2172.0px;top:236.5px;width:14.0px;height:13.0px;background:#79706e;"></div>
<div style="position:absolute;top:232.5px;height:23px;line-height:23px;font-size:18px;color:#555;white-space:nowrap;left:2194.0px;">상도동</div>
<div style="position:absolute;left:2172.0px;top:261.5px;width:14.0px;height:13.0px;background:#8cd17d;"></div>
<div style="position:absolute;top:257.5px;height:23px;line-height:23px;font-size:18px;color:#555;white-space:nowrap;left:2194.0px;">신대방동</div>
<div style="position:absolute;left:2172.0px;top:286.5px;width:14.0px;height:13.0px;background:#4e79a7;"></div>
<div style="position:absolute;top:282.5px;height:23px;line-height:23px;font-size:18px;color:#555;white-space:nowrap;left:2194.0px;">흑석동</div>
<div style="position:absolute;left:312.0px;top:799.0px;width:1997.0px;height:634.0px;background:#fff;"></div>
<div style="position:absolute;left:476.5px;top:980.0px;width:1828.0px;height:57.0px;background:#f5f5f5;"></div>
<div style="position:absolute;left:476.5px;top:1094.0px;width:1828.0px;height:57.0px;background:#f5f5f5;"></div>
<div style="position:absolute;left:476.5px;top:1208.0px;width:1828.0px;height:57.0px;background:#f5f5f5;"></div>
<div style="position:absolute;left:476.5px;top:1322.0px;width:1828.0px;height:57.0px;background:#f5f5f5;"></div>
<svg style="position:absolute;left:0;top:0" width="2309" height="1440" viewBox="0 0 2309 1440"><path d="M316.5 923.5H2304.5M316.5 1379.5H2304.5" stroke="#cfcfcf" stroke-width="1"/><path d="M556.5 803V1379.5M2304.5 803V1379.5" stroke="#cfcfcf" stroke-width="1"/><path d="M1454.5 823V1379.5" stroke="#cfcfcf" stroke-width="1"/><path d="M944.5 843V1379.5" stroke="#cfcfcf" stroke-width="1"/><path d="M1964.5 843V1379.5" stroke="#cfcfcf" stroke-width="1"/><path d="M604.5 863V1379.5" stroke="#cfcfcf" stroke-width="1"/><path d="M774.5 863V1379.5" stroke="#cfcfcf" stroke-width="1"/><path d="M1114.5 863V1379.5" stroke="#cfcfcf" stroke-width="1"/><path d="M1284.5 863V1379.5" stroke="#cfcfcf" stroke-width="1"/><path d="M1624.5 863V1379.5" stroke="#cfcfcf" stroke-width="1"/><path d="M1794.5 863V1379.5" stroke="#cfcfcf" stroke-width="1"/><path d="M2134.5 863V1379.5" stroke="#cfcfcf" stroke-width="1"/></svg>
<div style="position:absolute;top:802.0px;height:23px;line-height:23px;font-size:18px;color:#333;white-space:nowrap;left:1370.0px;width:120px;text-align:center;">계약년월</div>
<div style="position:absolute;top:820.6px;height:25px;line-height:25px;font-size:19px;color:#111;white-space:nowrap;font-weight:bold;left:734.0px;width:80px;text-align:center;">2024</div>
<div style="position:absolute;top:820.6px;height:25px;line-height:25px;font-size:19px;color:#111;white-space:nowrap;font-weight:bold;left:1839.5px;width:80px;text-align:center;">2025</div>
<div style="position:absolute;top:842.0px;height:23px;line-height:23px;font-size:18px;color:#333;white-space:nowrap;left:649.0px;width:80px;text-align:center;">3분기</div>
<div style="position:absolute;top:842.0px;height:23px;line-height:23px;font-size:18px;color:#333;white-space:nowrap;left:1159.0px;width:80px;text-align:center;">4분기</div>
<div style="position:absolute;top:842.0px;height:23px;line-height:23px;font-size:18px;color:#333;white-space:nowrap;left:1669.0px;width:80px;text-align:center;">1분기</div>
<div style="position:absolute;top:842.0px;height:23px;line-height:23px;font-size:18px;color:#333;white-space:nowrap;left:2094.0px;width:80px;text-align:center;">2분기</div>
<div style="position:absolute;top:862.0px;height:23px;line-height:23px;font-size:18px;color:#333;white-space:nowrap;left:557.0px;">7월</div>
<div style="position:absolute;top:862.0px;height:23px;line-height:23px;font-size:18px;color:#333;white-space:nowrap;left:649.0px;width:80px;text-align:center;">8월</div>
<div style="position:absolute;top:862.0px;height:23px;line-height:23px;font-size:18px;color:#333;white-space:nowrap;left:819.0px;width:80px;text-align:center;">9월</div>
<div style="position:absolute;top:862.0px;height:23px;line-height:23px;font-size:18px;color:#333;white-space:nowrap;left:989.0px;width:80px;text-align:center;">10월</div>
<div style="position:absolute;top:862.0px;height:23px;line-height:23px;font-size:18px;color:#333;white-space:nowrap;left:1159.0px;width:80px;text-align:center;">11월</div>
<div style="position:absolute;top:862.0px;height:23px;line-height:23px;font-size:18px;color:#333;white-space:nowrap;left:1329.0px;width:80px;text-align:center;">12월</div>
<div style="position:absolute;top:862.0px;height:23px;line-height:23px;font-size:18px;color:#333;white-space:nowrap;left:1499.0px;width:80px;text-align:center;">1월</div>
<div style="position:absolute;top:862.0px;height:23px;line-height:23px;font-size:18px;color:#333;white-space:nowrap;left:1669.0px;width:80px;text-align:center;">2월</div>
<div style="position:absolute;top:862.0px;height:23px;line-height:23px;font-size:18px;color:#333;white-space:nowrap;left:1839.0px;width:80px;text-align:center;">3월</div>
<div style="position:absolute;top:862.0px;height:23px;line-height:23px;font-size:18px;color:#333;white-space:nowrap;left:2009.0px;width:80px;text-align:center;">4월</div>
<div style="position:absolute;top:862.0px;height:23px;line-height:23px;font-size:18px;color:#333;white-space:nowrap;left:2179.0px;width:80px;text-align:center;">5월</div>
<div style="position:absolute;top:900.0px;height:23px;line-height:23px;font-size:18px;color:#333;white-space:nowrap;left:323.0px;">시도</div>
<div style="position:absolute;top:900.0px;height:23px;line-height:23px;font-size:18px;color:#333;white-space:nowrap;left:402.5px;">시군구</div>
<div style="position:absolute;top:900.0px;height:23px;line-height:23px;font-size:18px;color:#333;white-space:nowrap;left:483.0px;">법정동</div>
<div style="position:absolute;left:556.5px;top:800px;width:1748.0px;height:580px;overflow:hidden"><div style="position:absolute;top:100.0px;height:23px;line-height:23px;font-size:18px;color:#333;white-space:nowrap;left:-33.5px;width:90px;text-align:center;">전세가..</div><div style="position:absolute;top:100.0px;height:23px;line-height:23px;font-size:18px;color:#333;white-space:nowrap;left:51.5px;width:90px;text-align:center;">매매가..</div><div style="position:absolute;top:100.0px;height:23px;line-height:23px;font-size:18px;color:#333;white-space:nowrap;left:136.5px;width:90px;text-align:center;">전세가..</div><div style="position:absolute;top:100.0px;height:23px;line-height:23px;font-size:18px;color:#333;white-space:nowrap;left:221.5px;width:90px;text-align:center;">매매가..</div><div style="position:absolute;top:100.0px;height:23px;line-height:23px;font-size:18px;color:#333;white-space:nowrap;left:306.5px;width:90px;text-align:center;">전세가..</div><div style="position:absolute;top:100.0px;height:23px;line-height:23px;font-size:18px;color:#333;white-space:nowrap;left:391.5px;width:90px;text-align:center;">매매가..</div><div style="position:absolute;top:100.0px;height:23px;line-height:23px;font-size:18px;color:#333;white-space:nowrap;left:476.5px;width:90px;text-align:center;">전세가..</div><div style="position:absolute;top:100.0px;height:23px;line-height:23px;font-size:18px;color:#333;white-space:nowrap;left:561.5px;width:90px;text-align:center;">매매가..</div><div style="position:absolute;top:100.0px;height:23px;line-height:23px;font-size:18px;color:#333;white-space:nowrap;left:646.5px;width:90px;text-align:center;">전세가..</div><div style="position:absolute;top:100.0px;height:23px;line-height:23px;font-size:18px;color:#333;white-space:nowrap;left:731.5px;width:90px;text-align:center;">매매가..</div><div style="position:absolute;top:100.0px;height:23px;line-height:23px;font-size:18px;color:#333;white-space:nowrap;left:816.5px;width:90px;text-align:center;">전세가..</div><div style="position:absolute;top:100.0px;height:23px;line-height:23px;font-size:18px;color:#333;white-space:nowrap;left:901.5px;width:90px;text-align:center;">매매가..</div><div style="position:absolute;top:100.0px;height:23px;line-height:23px;font-size:18px;color:#333;white-space:nowrap;left:986.5px;width:90px;text-align:center;">전세가..</div><div style="position:absolute;top:100.0px;height:23px;line-height:23px;font-size:18px;color:#333;white-space:nowrap;left:1071.5px;width:90px;text-align:center;">매매가..</div><div style="position:absolute;top:100.0px;height:23px;line-height:23px;font-size:18px;color:#333;white-space:nowrap;left:1156.5px;width:90px;text-align:center;">전세가..</div><div style="position:absolute;top:100.0px;height:23px;line-height:23px;font-size:18px;color:#333;white-space:nowrap;left:1241.5px;width:90px;text-align:center;">매매가..</div><div style="position:absolute;top:100.0px;height:23px;line-height:23px;font-size:18px;color:#333;white-space:nowrap;left:1326.5px;width:90px;text-align:center;">전세가..</div><div style="position:absolute;top:100.0px;height:23px;line-height:23px;font-size:18px;color:#333;white-space:nowrap;left:1411.5px;width:90px;text-align:center;">매매가..</div><div style="position:absolute;top:100.0px;height:23px;line-height:23px;font-size:18px;color:#333;white-space:nowrap;left:1496.5px;width:90px;text-align:center;">전세가..</div><div style="position:absolute;top:100.0px;height:23px;line-height:23px;font-size:18px;color:#333;white-space:nowrap;left:1581.5px;width:90px;text-align:center;">매매가..</div><div style="position:absolute;top:100.0px;height:23px;line-height:23px;font-size:18px;color:#333;white-space:nowrap;left:1666.5px;width:90px;text-align:center;">전세가..</div><div style="position:absolute;top:139.6px;height:25px;line-height:25px;font-size:19px;color:#3d3d3d;white-space:nowrap;left:-46.5px;width:90px;text-align:right;">56,116</div><div style="position:absolute;top:139.6px;height:25px;line-height:25px;font-size:19px;color:#3d3d3d;white-space:nowrap;left:38.5px;width:90px;text-align:right;">107,640</div><div style="position:absolute;top:139.6px;height:25px;line-height:25px;font-size:19px;color:#3d3d3d;white-space:nowrap;left:123.5px;width:90px;text-align:right;">56,371</div><div style="position:absolute;top:139.6px;height:25px;line-height:25px;font-size:19px;color:#3d3d3d;white-space:nowrap;left:208.5px;width:90px;text-align:right;">103,733</div><div style="position:absolute;top:139.6px;height:25px;line-height:25px;font-size:19px;color:#3d3d3d;white-space:nowrap;left:293.5px;width:90px;text-align:right;">57,993</div><div style="position:absolute;top:139.6px;height:25px;line-height:25px;font-size:19px;color:#3d3d3d;white-space:nowrap;left:378.5px;width:90px;text-align:right;">102,120</div><div style="position:absolute;top:139.6px;height:25px;line-height:25px;font-size:19px;color:#3d3d3d;white-space:nowrap;left:463.5px;width:90px;text-align:right;">48,070</div><div style="position:absolute;top:139.6px;height:25px;line-height:25px;font-size:19px;color:#3d3d3d;white-space:nowrap;left:548.5px;width:90px;text-align:right;">102,900</div><div style="position:absolute;top:139.6px;height:25px;line-height:25px;font-size:19px;color:#3d3d3d;white-space:nowrap;left:633.5px;width:90px;text-align:right;">54,246</div><div style="position:absolute;top:139.6px;height:25px;line-height:25px;font-size:19px;color:#3d3d3d;white-space:nowrap;left:718.5px;width:90px;text-align:right;">106,743</div><div style="position:absolute;top:139.6px;height:25px;line-height:25px;font-size:19px;color:#3d3d3d;white-space:nowrap;left:803.5px;width:90px;text-align:right;">55,121</div><div style="position:absolute;top:139.6px;height:25px;line-height:25px;font-size:19px;color:#3d3d3d;white-space:nowrap;left:888.5px;width:90px;text-align:right;">103,530</div><div style="position:absolute;top:139.6px;height:25px;line-height:25px;font-size:19px;color:#3d3d3d;white-space:nowrap;left:973.5px;width:90px;text-align:right;">53,421</div><div style="position:absolute;top:139.6px;height:25px;line-height:25px;font-size:19px;color:#3d3d3d;white-space:nowrap;left:1058.5px;width:90px;text-align:right;">110,382</div><div style="position:absolute;top:139.6px;height:25px;line-height:25px;font-size:19px;color:#3d3d3d;white-space:nowrap;left:1143.5px;width:90px;text-align:right;">53,297</div><div style="position:absolute;top:139.6px;height:25px;line-height:25px;font-size:19px;color:#3d3d3d;white-space:nowrap;left:1228.5px;width:90px;text-align:right;">106,850</div><div style="position:absolute;top:139.6px;height:25px;line-height:25px;font-size:19px;color:#3d3d3d;white-space:nowrap;left:1313.5px;width:90px;text-align:right;">54,673</div><div style="position:absolute;top:139.6px;height:25px;line-height:25px;font-size:19px;color:#3d3d3d;white-space:nowrap;left:1398.5px;width:90px;text-align:right;">111,156</div><div style="position:absolute;top:139.6px;height:25px;line-height:25px;font-size:19px;color:#3d3d3d;white-space:nowrap;left:1483.5px;width:90px;text-align:right;">53,786</div><div style="position:absolute;top:139.6px;height:25px;line-height:25px;font-size:19px;color:#3d3d3d;white-space:nowrap;left:1568.5px;width:90px;text-align:right;">119,750</div><div style="position:absolute;top:139.6px;height:25px;line-height:25px;font-size:19px;color:#3d3d3d;white-space:nowrap;left:1653.5px;width:90px;text-align:right;">63,000</div><div style="position:absolute;top:196.6px;height:25px;line-height:25px;font-size:19px;color:#3d3d3d;white-space:nowrap;left:-46.5px;width:90px;text-align:right;">52,742</div><div style="position:absolute;top:196.6px;height:25px;line-height:25px;font-size:19px;color:#3d3d3d;white-space:nowrap;left:38.5px;width:90px;text-align:right;">120,273</div><div style="position:absolute;top:196.6px;height:25px;line-height:25px;font-size:19px;color:#3d3d3d;white-space:nowrap;left:123.5px;width:90px;text-align:right;">57,342</div><div style="position:absolute;top:196.6px;height:25px;line-height:25px;font-size:19px;color:#3d3d3d;white-space:nowrap;left:208.5px;width:90px;text-align:right;">98,550</div><div style="position:absolute;top:196.6px;height:25px;line-height:25px;font-size:19px;color:#3d3d3d;white-space:nowrap;left:293.5px;width:90px;text-align:right;">53,014</div><div style="position:absolute;top:196.6px;height:25px;line-height:25px;font-size:19px;color:#3d3d3d;white-space:nowrap;left:378.5px;width:90px;text-align:right;">100,364</div><div style="position:absolute;top:196.6px;height:25px;line-height:25px;font-size:19px;color:#3d3d3d;white-space:nowrap;left:463.5px;width:90px;text-align:right;">58,223</div><div style="position:absolute;top:196.6px;height:25px;line-height:25px;font-size:19px;color:#3d3d3d;white-space:nowrap;left:548.5px;width:90px;text-align:right;">94,286</div><div style="position:absolute;top:196.6px;height:25px;line-height:25px;font-size:19px;color:#3d3d3d;white-space:nowrap;left:633.5px;width:90px;text-align:right;">57,743</div><div style="position:absolute;top:196.6px;height:25px;line-height:25px;font-size:19px;color:#3d3d3d;white-space:nowrap;left:718.5px;width:90px;text-align:right;">90,500</div><div style="position:absolute;top:196.6px;height:25px;line-height:25px;font-size:19px;color:#3d3d3d;white-space:nowrap;left:803.5px;width:90px;text-align:right;">49,590</div><div style="position:absolute;top:196.6px;height:25px;line-height:25px;font-size:19px;color:#3d3d3d;white-space:nowrap;left:888.5px;width:90px;text-align:right;">102,818</div><div style="position:absolute;top:196.6px;height:25px;line-height:25px;font-size:19px;color:#3d3d3d;white-space:nowrap;left:973.5px;width:90px;text-align:right;">55,637</div><div style="position:absolute;top:196.6px;height:25px;line-height:25px;font-size:19px;color:#3d3d3d;white-space:nowrap;left:1058.5px;width:90px;text-align:right;">117,173</div><div style="position:absolute;top:196.6px;height:25px;line-height:25px;font-size:19px;color:#3d3d3d;white-space:nowrap;left:1143.5px;width:90px;text-align:right;">54,319</div><div style="position:absolute;top:196.6px;height:25px;line-height:25px;font-size:19px;color:#3d3d3d;white-space:nowrap;left:1228.5px;width:90px;text-align:right;">107,809</div><div style="position:absolute;top:196.6px;height:25px;line-height:25px;font-size:19px;color:#3d3d3d;white-space:nowrap;left:1313.5px;width:90px;text-align:right;">53,814</div><div style="position:absolute;top:196.6px;height:25px;line-height:25px;font-size:19px;color:#3d3d3d;white-space:nowrap;left:1398.5px;width:90px;text-align:right;">110,706</div><div style="position:absolute;top:196.6px;height:25px;line-height:25px;font-size:19px;color:#3d3d3d;white-space:nowrap;left:1483.5px;width:90px;text-align:right;">49,205</div><div style="position:absolute;top:196.6px;height:25px;line-height:25px;font-size:19px;color:#3d3d3d;white-space:nowrap;left:1568.5px;width:90px;text-align:right;">97,500</div><div style="position:absolute;top:196.6px;height:25px;line-height:25px;font-size:19px;color:#3d3d3d;white-space:nowrap;left:1653.5px;width:90px;text-align:right;">53,033</div><div style="position:absolute;top:253.6px;height:25px;line-height:25px;font-size:19px;color:#3d3d3d;white-space:nowrap;left:-46.5px;width:90px;text-align:right;">86,444</div><div style="position:absolute;top:253.6px;height:25px;line-height:25px;font-size:19px;color:#3d3d3d;white-space:nowrap;left:38.5px;width:90px;text-align:right;">149,875</div><div style="position:absolute;top:253.6px;height:25px;line-height:25px;font-size:19px;color:#3d3d3d;white-space:nowrap;left:123.5px;width:90px;text-align:right;">86,559</div><div style="position:absolute;top:253.6px;height:25px;line-height:25px;font-size:19px;color:#3d3d3d;white-space:nowrap;left:378.5px;width:90px;text-align:right;">195,000</div><div style="position:absolute;top:253.6px;height:25px;line-height:25px;font-size:19px;color:#3d3d3d;white-space:nowrap;left:463.5px;width:90px;text-align:right;">102,125</div><div style="position:absolute;top:253.6px;height:25px;line-height:25px;font-size:19px;color:#3d3d3d;white-space:nowrap;left:548.5px;width:90px;text-align:right;">136,800</div><div style="position:absolute;top:253.6px;height:25px;line-height:25px;font-size:19px;color:#3d3d3d;white-space:nowrap;left:633.5px;width:90px;text-align:right;">76,550</div><div style="position:absolute;top:253.6px;height:25px;line-height:25px;font-size:19px;color:#3d3d3d;white-space:nowrap;left:718.5px;width:90px;text-align:right;">137,000</div><div style="position:absolute;top:253.6px;height:25px;line-height:25px;font-size:19px;color:#3d3d3d;white-space:nowrap;left:803.5px;width:90px;text-align:right;">81,300</div><div style="position:absolute;top:253.6px;height:25px;line-height:25px;font-size:19px;color:#3d3d3d;white-space:nowrap;left:888.5px;width:90px;text-align:right;">137,250</div><div style="position:absolute;top:253.6px;height:25px;line-height:25px;font-size:19px;color:#3d3d3d;white-space:nowrap;left:973.5px;width:90px;text-align:right;">80,322</div><div style="position:absolute;top:253.6px;height:25px;line-height:25px;font-size:19px;color:#3d3d3d;white-space:nowrap;left:1058.5px;width:90px;text-align:right;">162,000</div><div style="position:absolute;top:253.6px;height:25px;line-height:25px;font-size:19px;color:#3d3d3d;white-space:nowrap;left:1143.5px;width:90px;text-align:right;">88,740</div><div style="position:absolute;top:253.6px;height:25px;line-height:25px;font-size:19px;color:#3d3d3d;white-space:nowrap;left:1228.5px;width:90px;text-align:right;">149,400</div><div style="position:absolute;top:253.6px;height:25px;line-height:25px;font-size:19px;color:#3d3d3d;white-space:nowrap;left:1313.5px;width:90px;text-align:right;">85,383</div><div style="position:absolute;top:253.6px;height:25px;line-height:25px;font-size:19px;color:#3d3d3d;white-space:nowrap;left:1398.5px;width:90px;text-align:right;">167,975</div><div style="position:absolute;top:253.6px;height:25px;line-height:25px;font-size:19px;color:#3d3d3d;white-space:nowrap;left:1483.5px;width:90px;text-align:right;">99,875</div><div style="position:absolute;top:310.6px;height:25px;line-height:25px;font-size:19px;color:#3d3d3d;white-space:nowrap;left:-46.5px;width:90px;text-align:right;">56,003</div><div style="position:absolute;top:310.6px;height:25px;line-height:25px;font-size:19px;color:#3d3d3d;white-space:nowrap;left:38.5px;width:90px;text-align:right;">97,586</div><div style="position:absolute;top:310.6px;height:25px;line-height:25px;font-size:19px;color:#3d3d3d;white-space:nowrap;left:123.5px;width:90px;text-align:right;">49,949</div><div style="position:absolute;top:310.6px;height:25px;line-height:25px;font-size:19px;color:#3d3d3d;white-space:nowrap;left:208.5px;width:90px;text-align:right;">119,000</div><div style="position:absolute;top:310.6px;height:25px;line-height:25px;font-size:19px;color:#3d3d3d;white-space:nowrap;left:293.5px;width:90px;text-align:right;">54,031</div><div style="position:absolute;top:310.6px;height:25px;line-height:25px;font-size:19px;color:#3d3d3d;white-space:nowrap;left:378.5px;width:90px;text-align:right;">103,760</div><div style="position:absolute;top:310.6px;height:25px;line-height:25px;font-size:19px;color:#3d3d3d;white-space:nowrap;left:463.5px;width:90px;text-align:right;">50,585</div><div style="position:absolute;top:310.6px;height:25px;line-height:25px;font-size:19px;color:#3d3d3d;white-space:nowrap;left:548.5px;width:90px;text-align:right;">117,090</div><div style="position:absolute;top:310.6px;height:25px;line-height:25px;font-size:19px;color:#3d3d3d;white-space:nowrap;left:633.5px;width:90px;text-align:right;">53,213</div><div style="position:absolute;top:310.6px;height:25px;line-height:25px;font-size:19px;color:#3d3d3d;white-space:nowrap;left:718.5px;width:90px;text-align:right;">122,167</div><div style="position:absolute;top:310.6px;height:25px;line-height:25px;font-size:19px;color:#3d3d3d;white-space:nowrap;left:803.5px;width:90px;text-align:right;">62,917</div><div style="position:absolute;top:310.6px;height:25px;line-height:25px;font-size:19px;color:#3d3d3d;white-space:nowrap;left:888.5px;width:90px;text-align:right;">95,375</div><div style="position:absolute;top:310.6px;height:25px;line-height:25px;font-size:19px;color:#3d3d3d;white-space:nowrap;left:973.5px;width:90px;text-align:right;">41,827</div><div style="position:absolute;top:310.6px;height:25px;line-height:25px;font-size:19px;color:#3d3d3d;white-space:nowrap;left:1058.5px;width:90px;text-align:right;">116,867</div><div style="position:absolute;top:310.6px;height:25px;line-height:25px;font-size:19px;color:#3d3d3d;white-space:nowrap;left:1143.5px;width:90px;text-align:right;">53,718</div><div style="position:absolute;top:310.6px;height:25px;line-height:25px;font-size:19px;color:#3d3d3d;white-space:nowrap;left:1228.5px;width:90px;text-align:right;">139,763</div><div style="position:absolute;top:310.6px;height:25px;line-height:25px;font-size:19px;color:#3d3d3d;white-space:nowrap;left:1313.5px;width:90px;text-align:right;">52,293</div><div style="position:absolute;top:310.6px;height:25px;line-height:25px;font-size:19px;color:#3d3d3d;white-space:nowrap;left:1398.5px;width:90px;text-align:right;">117,665</div><div style="position:absolute;top:310.6px;height:25px;line-height:25px;font-size:19px;color:#3d3d3d;white-space:nowrap;left:1483.5px;width:90px;text-align:right;">52,527</div><div style="position:absolute;top:310.6px;height:25px;line-height:25px;font-size:19px;color:#3d3d3d;white-space:nowrap;left:1568.5px;width:90px;text-align:right;">90,000</div><div style="position:absolute;top:310.6px;height:25px;line-height:25px;font-size:19px;color:#3d3d3d;white-space:nowrap;left:1653.5px;width:90px;text-align:right;">66,150</div><div style="position:absolute;top:367.6px;height:25px;line-height:25px;font-size:19px;color:#3d3d3d;white-space:nowrap;left:-46.5px;width:90px;text-align:right;">60,670</div><div style="position:absolute;top:367.6px;height:25px;line-height:25px;font-size:19px;color:#3d3d3d;white-space:nowrap;left:38.5px;width:90px;text-align:right;">115,087</div><div style="position:absolute;top:367.6px;height:25px;line-height:25px;font-size:19px;color:#3d3d3d;white-space:nowrap;left:123.5px;width:90px;text-align:right;">60,402</div><div style="position:absolute;top:367.6px;height:25px;line-height:25px;font-size:19px;color:#3d3d3d;white-space:nowrap;left:208.5px;width:90px;text-align:right;">107,784</div><div style="position:absolute;top:367.6px;height:25px;line-height:25px;font-size:19px;color:#3d3d3d;white-space:nowrap;left:293.5px;width:90px;text-align:right;">56,672</div><div style="position:absolute;top:367.6px;height:25px;line-height:25px;font-size:19px;color:#3d3d3d;white-space:nowrap;left:378.5px;width:90px;text-align:right;">108,857</div><div style="position:absolute;top:367.6px;height:25px;line-height:25px;font-size:19px;color:#3d3d3d;white-space:nowrap;left:463.5px;width:90px;text-align:right;">56,404</div><div style="position:absolute;top:367.6px;height:25px;line-height:25px;font-size:19px;color:#3d3d3d;white-space:nowrap;left:548.5px;width:90px;text-align:right;">103,986</div><div style="position:absolute;top:367.6px;height:25px;line-height:25px;font-size:19px;color:#3d3d3d;white-space:nowrap;left:633.5px;width:90px;text-align:right;">58,719</div><div style="position:absolute;top:367.6px;height:25px;line-height:25px;font-size:19px;color:#3d3d3d;white-space:nowrap;left:718.5px;width:90px;text-align:right;">106,671</div><div style="position:absolute;top:367.6px;height:25px;line-height:25px;font-size:19px;color:#3d3d3d;white-space:nowrap;left:803.5px;width:90px;text-align:right;">61,139</div><div style="position:absolute;top:367.6px;height:25px;line-height:25px;font-size:19px;color:#3d3d3d;white-space:nowrap;left:888.5px;width:90px;text-align:right;">112,420</div><div style="position:absolute;top:367.6px;height:25px;line-height:25px;font-size:19px;color:#3d3d3d;white-space:nowrap;left:973.5px;width:90px;text-align:right;">58,806</div><div style="position:absolute;top:367.6px;height:25px;line-height:25px;font-size:19px;color:#3d3d3d;white-space:nowrap;left:1058.5px;width:90px;text-align:right;">112,022</div><div style="position:absolute;top:367.6px;height:25px;line-height:25px;font-size:19px;color:#3d3d3d;white-space:nowrap;left:1143.5px;width:90px;text-align:right;">57,368</div><div style="position:absolute;top:367.6px;height:25px;line-height:25px;font-size:19px;color:#3d3d3d;white-space:nowrap;left:1228.5px;width:90px;text-align:right;">119,342</div><div style="position:absolute;top:367.6px;height:25px;line-height:25px;font-size:19px;color:#3d3d3d;white-space:nowrap;left:1313.5px;width:90px;text-align:right;">57,731</div><div style="position:absolute;top:367.6px;height:25px;line-height:25px;font-size:19px;color:#3d3d3d;white-space:nowrap;left:1398.5px;width:90px;text-align:right;">120,654</div><div style="position:absolute;top:367.6px;height:25px;line-height:25px;font-size:19px;color:#3d3d3d;white-space:nowrap;left:1483.5px;width:90px;text-align:right;">57,742</div><div style="position:absolute;top:367.6px;height:25px;line-height:25px;font-size:19px;color:#3d3d3d;white-space:nowrap;left:1568.5px;width:90px;text-align:right;">187,000</div><div style="position:absolute;top:367.6px;height:25px;line-height:25px;font-size:19px;color:#3d3d3d;white-space:nowrap;left:1653.5px;width:90px;text-align:right;">85,417</div><div style="position:absolute;top:424.6px;height:25px;line-height:25px;font-size:19px;color:#3d3d3d;white-space:nowrap;left:-46.5px;width:90px;text-align:right;">75,531</div><div style="position:absolute;top:424.6px;height:25px;line-height:25px;font-size:19px;color:#3d3d3d;white-space:nowrap;left:38.5px;width:90px;text-align:right;">126,338</div><div style="position:absolute;top:424.6px;height:25px;line-height:25px;font-size:19px;color:#3d3d3d;white-space:nowrap;left:123.5px;width:90px;text-align:right;">73,123</div><div style="position:absolute;top:424.6px;height:25px;line-height:25px;font-size:19px;color:#3d3d3d;white-space:nowrap;left:208.5px;width:90px;text-align:right;">128,336</div><div style="position:absolute;top:424.6px;height:25px;line-height:25px;font-size:19px;color:#3d3d3d;white-space:nowrap;left:293.5px;width:90px;text-align:right;">69,437</div><div style="position:absolute;top:424.6px;height:25px;line-height:25px;font-size:19px;color:#3d3d3d;white-space:nowrap;left:378.5px;width:90px;text-align:right;">129,067</div><div style="position:absolute;top:424.6px;height:25px;line-height:25px;font-size:19px;color:#3d3d3d;white-space:nowrap;left:463.5px;width:90px;text-align:right;">58,848</div><div style="position:absolute;top:424.6px;height:25px;line-height:25px;font-size:19px;color:#3d3d3d;white-space:nowrap;left:548.5px;width:90px;text-align:right;">125,940</div><div style="position:absolute;top:424.6px;height:25px;line-height:25px;font-size:19px;color:#3d3d3d;white-space:nowrap;left:633.5px;width:90px;text-align:right;">70,372</div><div style="position:absolute;top:424.6px;height:25px;line-height:25px;font-size:19px;color:#3d3d3d;white-space:nowrap;left:718.5px;width:90px;text-align:right;">115,592</div><div style="position:absolute;top:424.6px;height:25px;line-height:25px;font-size:19px;color:#3d3d3d;white-space:nowrap;left:803.5px;width:90px;text-align:right;">66,505</div><div style="position:absolute;top:424.6px;height:25px;line-height:25px;font-size:19px;color:#3d3d3d;white-space:nowrap;left:888.5px;width:90px;text-align:right;">129,810</div><div style="position:absolute;top:424.6px;height:25px;line-height:25px;font-size:19px;color:#3d3d3d;white-space:nowrap;left:973.5px;width:90px;text-align:right;">63,713</div><div style="position:absolute;top:424.6px;height:25px;line-height:25px;font-size:19px;color:#3d3d3d;white-space:nowrap;left:1058.5px;width:90px;text-align:right;">130,391</div><div style="position:absolute;top:424.6px;height:25px;line-height:25px;font-size:19px;color:#3d3d3d;white-space:nowrap;left:1143.5px;width:90px;text-align:right;">67,393</div><div style="position:absolute;top:424.6px;height:25px;line-height:25px;font-size:19px;color:#3d3d3d;white-space:nowrap;left:1228.5px;width:90px;text-align:right;">132,769</div><div style="position:absolute;top:424.6px;height:25px;line-height:25px;font-size:19px;color:#3d3d3d;white-space:nowrap;left:1313.5px;width:90px;text-align:right;">66,551</div><div style="position:absolute;top:424.6px;height:25px;line-height:25px;font-size:19px;color:#3d3d3d;white-space:nowrap;left:1398.5px;width:90px;text-align:right;">125,986</div><div style="position:absolute;top:424.6px;height:25px;line-height:25px;font-size:19px;color:#3d3d3d;white-space:nowrap;left:1483.5px;width:90px;text-align:right;">64,778</div><div style="position:absolute;top:424.6px;height:25px;line-height:25px;font-size:19px;color:#3d3d3d;white-space:nowrap;left:1568.5px;width:90px;text-align:right;">137,783</div><div style="position:absolute;top:424.6px;height:25px;line-height:25px;font-size:19px;color:#3d3d3d;white-space:nowrap;left:1653.5px;width:90px;text-align:right;">71,357</div><div style="position:absolute;top:481.6px;height:25px;line-height:25px;font-size:19px;color:#3d3d3d;white-space:nowrap;left:-46.5px;width:90px;text-align:right;">58,338</div><div style="position:absolute;top:481.6px;height:25px;line-height:25px;font-size:19px;color:#3d3d3d;white-space:nowrap;left:38.5px;width:90px;text-align:right;">102,715</div><div style="position:absolute;top:481.6px;height:25px;line-height:25px;font-size:19px;color:#3d3d3d;white-space:nowrap;left:123.5px;width:90px;text-align:right;">59,650</div><div style="position:absolute;top:481.6px;height:25px;line-height:25px;font-size:19px;color:#3d3d3d;white-space:nowrap;left:208.5px;width:90px;text-align:right;">90,436</div><div style="position:absolute;top:481.6px;height:25px;line-height:25px;font-size:19px;color:#3d3d3d;white-space:nowrap;left:293.5px;width:90px;text-align:right;">56,144</div><div style="position:absolute;top:481.6px;height:25px;line-height:25px;font-size:19px;color:#3d3d3d;white-space:nowrap;left:378.5px;width:90px;text-align:right;">96,115</div><div style="position:absolute;top:481.6px;height:25px;line-height:25px;font-size:19px;color:#3d3d3d;white-space:nowrap;left:463.5px;width:90px;text-align:right;">59,113</div><div style="position:absolute;top:481.6px;height:25px;line-height:25px;font-size:19px;color:#3d3d3d;white-space:nowrap;left:548.5px;width:90px;text-align:right;">96,100</div><div style="position:absolute;top:481.6px;height:25px;line-height:25px;font-size:19px;color:#3d3d3d;white-space:nowrap;left:633.5px;width:90px;text-align:right;">66,028</div><div style="position:absolute;top:481.6px;height:25px;line-height:25px;font-size:19px;color:#3d3d3d;white-space:nowrap;left:718.5px;width:90px;text-align:right;">101,704</div><div style="position:absolute;top:481.6px;height:25px;line-height:25px;font-size:19px;color:#3d3d3d;white-space:nowrap;left:803.5px;width:90px;text-align:right;">55,663</div><div style="position:absolute;top:481.6px;height:25px;line-height:25px;font-size:19px;color:#3d3d3d;white-space:nowrap;left:888.5px;width:90px;text-align:right;">100,813</div><div style="position:absolute;top:481.6px;height:25px;line-height:25px;font-size:19px;color:#3d3d3d;white-space:nowrap;left:973.5px;width:90px;text-align:right;">55,108</div><div style="position:absolute;top:481.6px;height:25px;line-height:25px;font-size:19px;color:#3d3d3d;white-space:nowrap;left:1058.5px;width:90px;text-align:right;">102,917</div><div style="position:absolute;top:481.6px;height:25px;line-height:25px;font-size:19px;color:#3d3d3d;white-space:nowrap;left:1143.5px;width:90px;text-align:right;">54,162</div><div style="position:absolute;top:481.6px;height:25px;line-height:25px;font-size:19px;color:#3d3d3d;white-space:nowrap;left:1228.5px;width:90px;text-align:right;">100,033</div><div style="position:absolute;top:481.6px;height:25px;line-height:25px;font-size:19px;color:#3d3d3d;white-space:nowrap;left:1313.5px;width:90px;text-align:right;">51,218</div><div style="position:absolute;top:481.6px;height:25px;line-height:25px;font-size:19px;color:#3d3d3d;white-space:nowrap;left:1398.5px;width:90px;text-align:right;">98,286</div><div style="position:absolute;top:481.6px;height:25px;line-height:25px;font-size:19px;color:#3d3d3d;white-space:nowrap;left:1483.5px;width:90px;text-align:right;">53,353</div><div style="position:absolute;top:481.6px;height:25px;line-height:25px;font-size:19px;color:#3d3d3d;white-space:nowrap;left:1568.5px;width:90px;text-align:right;">96,875</div><div style="position:absolute;top:481.6px;height:25px;line-height:25px;font-size:19px;color:#3d3d3d;white-space:nowrap;left:1653.5px;width:90px;text-align:right;">54,340</div><div style="position:absolute;top:538.6px;height:25px;line-height:25px;font-size:19px;color:#3d3d3d;white-space:nowrap;left:-46.5px;width:90px;text-align:right;">79,633</div><div style="position:absolute;top:538.6px;height:25px;line-height:25px;font-size:19px;color:#3d3d3d;white-space:nowrap;left:38.5px;width:90px;text-align:right;">173,126</div><div style="position:absolute;top:538.6px;height:25px;line-height:25px;font-size:19px;color:#3d3d3d;white-space:nowrap;left:123.5px;width:90px;text-align:right;">85,161</div><div style="position:absolute;top:538.6px;height:25px;line-height:25px;font-size:19px;color:#3d3d3d;white-space:nowrap;left:208.5px;width:90px;text-align:right;">168,842</div><div style="position:absolute;top:538.6px;height:25px;line-height:25px;font-size:19px;color:#3d3d3d;white-space:nowrap;left:293.5px;width:90px;text-align:right;">75,803</div><div style="position:absolute;top:538.6px;height:25px;line-height:25px;font-size:19px;color:#3d3d3d;white-space:nowrap;left:378.5px;width:90px;text-align:right;">167,427</div><div style="position:absolute;top:538.6px;height:25px;line-height:25px;font-size:19px;color:#3d3d3d;white-space:nowrap;left:463.5px;width:90px;text-align:right;">83,204</div><div style="position:absolute;top:538.6px;height:25px;line-height:25px;font-size:19px;color:#3d3d3d;white-space:nowrap;left:548.5px;width:90px;text-align:right;">173,445</div><div style="position:absolute;top:538.6px;height:25px;line-height:25px;font-size:19px;color:#3d3d3d;white-space:nowrap;left:633.5px;width:90px;text-align:right;">76,883</div><div style="position:absolute;top:538.6px;height:25px;line-height:25px;font-size:19px;color:#3d3d3d;white-space:nowrap;left:718.5px;width:90px;text-align:right;">150,500</div><div style="position:absolute;top:538.6px;height:25px;line-height:25px;font-size:19px;color:#3d3d3d;white-space:nowrap;left:803.5px;width:90px;text-align:right;">79,055</div><div style="position:absolute;top:538.6px;height:25px;line-height:25px;font-size:19px;color:#3d3d3d;white-space:nowrap;left:888.5px;width:90px;text-align:right;">165,173</div><div style="position:absolute;top:538.6px;height:25px;line-height:25px;font-size:19px;color:#3d3d3d;white-space:nowrap;left:973.5px;width:90px;text-align:right;">76,699</div><div style="position:absolute;top:538.6px;height:25px;line-height:25px;font-size:19px;color:#3d3d3d;white-space:nowrap;left:1058.5px;width:90px;text-align:right;">187,609</div><div style="position:absolute;top:538.6px;height:25px;line-height:25px;font-size:19px;color:#3d3d3d;white-space:nowrap;left:1143.5px;width:90px;text-align:right;">71,575</div><div style="position:absolute;top:538.6px;height:25px;line-height:25px;font-size:19px;color:#3d3d3d;white-space:nowrap;left:1228.5px;width:90px;text-align:right;">179,001</div><div style="position:absolute;top:538.6px;height:25px;line-height:25px;font-size:19px;color:#3d3d3d;white-space:nowrap;left:1313.5px;width:90px;text-align:right;">64,550</div><div style="position:absolute;top:538.6px;height:25px;line-height:25px;font-size:19px;color:#3d3d3d;white-space:nowrap;left:1398.5px;width:90px;text-align:right;">184,119</div><div style="position:absolute;top:538.6px;height:25px;line-height:25px;font-size:19px;color:#3d3d3d;white-space:nowrap;left:1483.5px;width:90px;text-align:right;">67,289</div><div style="position:absolute;top:538.6px;height:25px;line-height:25px;font-size:19px;color:#3d3d3d;white-space:nowrap;left:1568.5px;width:90px;text-align:right;">199,000</div><div style="position:absolute;top:538.6px;height:25px;line-height:25px;font-size:19px;color:#3d3d3d;white-space:nowrap;left:1653.5px;width:90px;text-align:right;">88,500</div></div>
<div style="position:absolute;top:941.0px;height:23px;line-height:23px;font-size:18px;color:#333;white-space:nowrap;left:323.0px;">서울특..</div>
<div style="position:absolute;top:941.0px;height:23px;line-height:23px;font-size:18px;color:#333;white-space:nowrap;left:402.5px;">동작구</div>
<div style="position:absolute;left:476px;top:900px;width:80px;height:480px;overflow:hidden"><div style="position:absolute;top:40.5px;height:23px;line-height:23px;font-size:18px;color:#333;white-space:nowrap;left:7.0px;">노량진동</div><div style="position:absolute;top:97.5px;height:23px;line-height:23px;font-size:18px;color:#333;white-space:nowrap;left:7.0px;">대방동</div><div style="position:absolute;top:154.5px;height:23px;line-height:23px;font-size:18px;color:#333;white-space:nowrap;left:7.0px;">동작동</div><div style="position:absolute;top:211.5px;height:23px;line-height:23px;font-size:18px;color:#333;white-space:nowrap;left:7.0px;">본동</div><div style="position:absolute;top:268.5px;height:23px;line-height:23px;font-size:18px;color:#333;white-space:nowrap;left:7.0px;">사당동</div><div style="position:absolute;top:325.5px;height:23px;line-height:23px;font-size:18px;color:#333;white-space:nowrap;left:7.0px;">상도동</div><div style="position:absolute;top:382.5px;height:23px;line-height:23px;font-size:18px;color:#333;white-space:nowrap;left:7.0px;">신대방동</div><div style="position:absolute;top:439.5px;height:23px;line-height:23px;font-size:18px;color:#333;white-space:nowrap;left:7.0px;">흑석동</div></div>
<div style="position:absolute;left:1371px;top:1210px;width:81px;height:52px;border:1px solid #111;box-sizing:content-box"></div>
<div style="position:absolute;left:556.5px;top:1381.0px;width:1748.0px;height:23.0px;background:#f0f0f0;"></div>
<div style="position:absolute;left:931.0px;top:1381.0px;width:1348.0px;height:23.0px;background:#cdcdcd;"></div>
<svg style="position:absolute;left:563.0px;top:1385.0px;" width="12" height="14" viewBox="0 0 12 14"><path d="M8.5 2.5L4 7l4.5 4.5" stroke="#555" stroke-width="1.8" fill="none"/></svg>
<svg style="position:absolute;left:2286.0px;top:1385.0px;" width="12" height="14" viewBox="0 0 12 14"><path d="M3.5 2.5L8 7l-4.5 4.5" stroke="#555" stroke-width="1.8" fill="none"/></svg>
<div style="position:absolute;left:310.5px;top:797.5px;width:2000.0px;height:2.0px;background:#5a5a5a;"></div>
<div style="position:absolute;left:310.5px;top:797.5px;width:2.0px;height:636.0px;background:#5a5a5a;"></div>
<div style="position:absolute;left:310.5px;top:1431.5px;width:2000.0px;height:2.0px;background:#5a5a5a;"></div>
<div style="position:absolute;left:310.5px;top:797.5px;width:19.5px;height:83.0px;background:#626262;border-radius:0 0 2px 0;"></div>
<svg style="position:absolute;left:313.0px;top:801.0px;" width="14" height="14" viewBox="0 0 14 14"><path d="M2.5 1.5l9 9M11.5 1.5l-9 9" stroke="#fff" stroke-width="1.5"/></svg>
<svg style="position:absolute;left:312.5px;top:820.0px;" width="14" height="14" viewBox="0 0 14 14"><path d="M6 3H1.5v9.5H11V8" stroke="#fff" stroke-width="1.4" fill="none"/><path d="M5 9l7-7M7.5 1.5H12.5V6.5" stroke="#fff" stroke-width="1.5" fill="none"/></svg>
<svg style="position:absolute;left:312.5px;top:842.0px;" width="15" height="15" viewBox="0 0 15 15"><path d="M1.5 1.5h12L8.5 7.5v6h-2v-6z" stroke="#fff" stroke-width="1.4" fill="none" stroke-linejoin="round"/></svg>
<svg style="position:absolute;left:314.5px;top:867.0px;" width="10" height="6" viewBox="0 0 10 6"><path d="M0 0h10L5 5z" fill="#fff"/></svg>
<svg style="position:absolute;left:1285.0px;top:785.0px;" width="50" height="14" viewBox="0 0 50 14"><rect x="0.5" y="3" width="48" height="12" rx="2" fill="#666"/><path d="M4 7.5h41M4 10.5h41" stroke="#fff" stroke-width="1"/></svg>
<div style="position:absolute;left:1450px;top:1237px;width:278px;height:113px;background:#fff;box-shadow:1px 2px 6px rgba(0,0,0,.35);border:1px solid #e6e6e6;box-sizing:border-box"></div>
<div style="position:absolute;top:1249.0px;height:26px;line-height:26px;font-size:20px;color:#333;white-space:nowrap;font-weight:bold;left:1461.0px;">서울특별시 동작구 상도동</div>
<div style="position:absolute;top:1280.5px;height:26px;line-height:26px;font-size:20px;color:#333;white-space:nowrap;font-weight:bold;left:1461.0px;">2024년 4분기 12월</div>
<div style="position:absolute;top:1311.5px;height:26px;line-height:26px;font-size:20px;color:#333;white-space:nowrap;font-weight:bold;left:1461.0px;">66,505만원</div>
</body></html>
